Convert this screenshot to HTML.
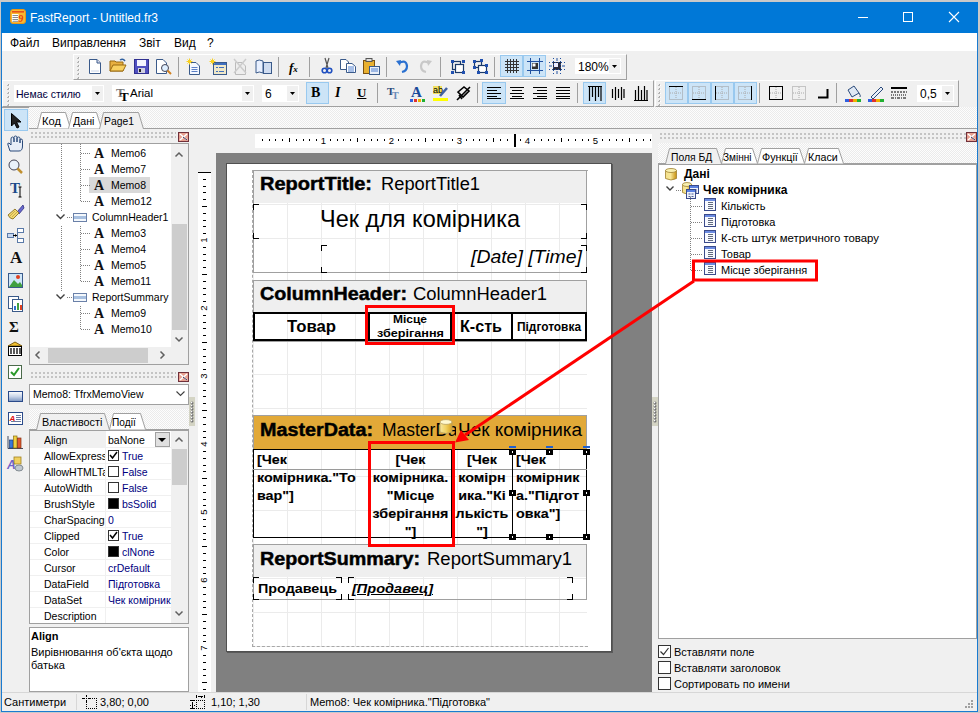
<!DOCTYPE html>
<html><head><meta charset="utf-8">
<style>
*{margin:0;padding:0;box-sizing:border-box}
html,body{width:980px;height:713px;overflow:hidden;background:#c9c9c9;font-family:"Liberation Sans",sans-serif}
.a{position:absolute}
.t{position:absolute;white-space:nowrap;line-height:1}
svg{overflow:visible}
</style></head><body>
<div class="a" style="left:0px;top:0px;width:980px;height:713px;background:#c9c9c9"></div>
<div class="a" style="left:1px;top:2px;width:977px;height:710px;background:#f0f0f0;border-left:1px solid #1a7bd0;border-right:1px solid #1a7bd0;border-bottom:1px solid #1a7bd0"></div>
<div class="a" style="left:1px;top:2px;width:977px;height:31px;background:#0078d7"></div>
<svg class="a" style="left:10px;top:9px;" width="16" height="15" viewBox="0 0 16 15"><rect x="0.5" y="0.5" width="15" height="14" rx="2.5" fill="#f8b830" stroke="#e89818"/><rect x="2" y="2" width="12" height="1.6" fill="#e8501a"/><rect x="2" y="5" width="6.5" height="8" fill="#fff"/><path d="M2.5 6.5H8M2.5 8.5H8M2.5 10.5H8M2.5 12.3H8" stroke="#8a8a8a" stroke-width="1"/><text x="8.3" y="13" font-size="10" font-style="italic" font-weight="bold" fill="#e83a10" font-family="Liberation Serif">9</text></svg>
<div class="t" style="left:30px;top:12px;font-size:12px;color:#fff;">FastReport - Untitled.fr3</div>
<div class="a" style="left:858px;top:17px;width:10px;height:1px;background:#fff"></div>
<div class="a" style="left:903px;top:12px;width:10px;height:10px;border:1px solid #fff"></div>
<svg class="a" style="left:949px;top:12px;" width="10" height="10" viewBox="0 0 10 10"><path d="M0 0L10 10M10 0L0 10" stroke="#fff" stroke-width="1.1"/></svg>
<div class="a" style="left:2px;top:33px;width:975px;height:18px;background:#fff"></div>
<div class="t" style="left:10px;top:37px;font-size:12px;color:#000;">Файл</div>
<div class="t" style="left:52px;top:37px;font-size:12px;color:#000;">Виправлення</div>
<div class="t" style="left:139px;top:37px;font-size:12px;color:#000;">Звіт</div>
<div class="t" style="left:174px;top:37px;font-size:12px;color:#000;">Вид</div>
<div class="t" style="left:207px;top:37px;font-size:12px;color:#000;">?</div>
<div class="a" style="left:73px;top:54px;width:554px;height:26px;border-top:1px solid #fff;border-left:1px solid #fff;border-bottom:1px solid #a0a0a0;border-right:1px solid #a0a0a0;background:#f0f0f0"></div>
<div class="a" style="left:78px;top:57px;width:1px;height:1px;background:#a8a8a8"></div>
<div class="a" style="left:77px;top:58px;width:2px;height:1px;background:#b8b8b8"></div>
<div class="a" style="left:79px;top:58px;width:1px;height:1px;background:#fff"></div>
<div class="a" style="left:78px;top:61px;width:1px;height:1px;background:#a8a8a8"></div>
<div class="a" style="left:77px;top:62px;width:2px;height:1px;background:#b8b8b8"></div>
<div class="a" style="left:79px;top:62px;width:1px;height:1px;background:#fff"></div>
<div class="a" style="left:78px;top:65px;width:1px;height:1px;background:#a8a8a8"></div>
<div class="a" style="left:77px;top:66px;width:2px;height:1px;background:#b8b8b8"></div>
<div class="a" style="left:79px;top:66px;width:1px;height:1px;background:#fff"></div>
<div class="a" style="left:78px;top:69px;width:1px;height:1px;background:#a8a8a8"></div>
<div class="a" style="left:77px;top:70px;width:2px;height:1px;background:#b8b8b8"></div>
<div class="a" style="left:79px;top:70px;width:1px;height:1px;background:#fff"></div>
<div class="a" style="left:78px;top:73px;width:1px;height:1px;background:#a8a8a8"></div>
<div class="a" style="left:77px;top:74px;width:2px;height:1px;background:#b8b8b8"></div>
<div class="a" style="left:79px;top:74px;width:1px;height:1px;background:#fff"></div>
<div class="a" style="left:78px;top:77px;width:1px;height:1px;background:#a8a8a8"></div>
<div class="a" style="left:77px;top:78px;width:2px;height:1px;background:#b8b8b8"></div>
<div class="a" style="left:79px;top:78px;width:1px;height:1px;background:#fff"></div>
<svg class="a" style="left:89px;top:59px;" width="12" height="15" viewBox="0 0 12 15"><path d="M0.5 0.5H8L11.5 4V14.5H0.5Z" fill="#fff" stroke="#3a5a8a"/><path d="M8 0.5V4H11.5" fill="#dde" stroke="#3a5a8a"/><path d="M2 12H10" stroke="#c8d4e8"/></svg>
<svg class="a" style="left:109px;top:58px;" width="18" height="15" viewBox="0 0 18 15"><path d="M1 3H6L7 4H14V13H1Z" fill="#e8b040" stroke="#9a6a10"/><path d="M1 13L4 7H17L14 13Z" fill="#f8d060" stroke="#9a6a10"/><path d="M11 2Q14 0 16 3" stroke="#3060a0" fill="none" stroke-width="1.5"/></svg>
<svg class="a" style="left:134px;top:59px;" width="15" height="15" viewBox="0 0 15 15"><rect x="0.5" y="0.5" width="14" height="14" fill="#5050c0" stroke="#303090"/><rect x="3" y="1" width="9" height="6" fill="#f4f4ff"/><rect x="4" y="9" width="7" height="5" fill="#d0d0e0"/><rect x="5" y="10" width="2" height="3" fill="#222"/></svg>
<svg class="a" style="left:156px;top:59px;" width="16" height="16" viewBox="0 0 16 16"><path d="M0.5 0.5H7L10.5 4V14.5H0.5Z" fill="#fff" stroke="#3a5a8a"/><circle cx="9" cy="9" r="3.5" fill="#dfefff" stroke="#445"/><path d="M11.5 11.5L15 15" stroke="#d08020" stroke-width="2"/></svg>
<div class="a" style="left:178px;top:57px;width:1px;height:20px;background:#a0a0a0"></div>
<svg class="a" style="left:186px;top:58px;" width="15" height="17" viewBox="0 0 15 17"><path d="M3.5 4.5H10L13.5 8V16.5H3.5Z" fill="#f4f8ff" stroke="#3a5a8a"/><path d="M5.5 9.5H11.5M5.5 11.5H11.5M5.5 13.5H11.5" stroke="#4a70c0" stroke-width="0.9"/><path d="M3.5 0.5V6.5M0.5 3.5H6.5M1.5 1.5L5.5 5.5M5.5 1.5L1.5 5.5" stroke="#f8d020" stroke-width="1"/></svg>
<svg class="a" style="left:209px;top:58px;" width="18" height="17" viewBox="0 0 18 17"><rect x="4.5" y="4.5" width="13" height="12" fill="#f0e8c8" stroke="#3a5a8a"/><rect x="5" y="5" width="12" height="2" fill="#4070c0"/><path d="M7 9.5H9M10 9.5H15M7 13.5H9M10 13.5H15" stroke="#4070c0" stroke-width="1.2"/><path d="M3.5 0.5V6.5M0.5 3.5H6.5M1.5 1.5L5.5 5.5M5.5 1.5L1.5 5.5" stroke="#f8d020" stroke-width="1"/></svg>
<svg class="a" style="left:233px;top:58px;" width="15" height="17" viewBox="0 0 15 17"><path d="M2.5 4.5H9L12.5 8V16.5H2.5Z" fill="#eee" stroke="#bbb"/><path d="M1 1L13 15M13 1L1 15" stroke="#ccc" stroke-width="1.5"/></svg>
<svg class="a" style="left:255px;top:59px;" width="17" height="15" viewBox="0 0 17 15"><path d="M1 2Q4 0 8 2V14Q4 12 1 14Z" fill="#e8f0ff" stroke="#3a5a8a"/><rect x="8.5" y="3.5" width="8" height="11" fill="#cfdcf0" stroke="#3a5a8a"/></svg>
<div class="a" style="left:278px;top:57px;width:1px;height:20px;background:#a0a0a0"></div>
<div class="t" style="left:289px;top:61px;font-size:13px;color:#000;font-family:'Liberation Serif',serif"><i><b>f</b></i><i style='font-size:9px'><b>x</b></i></div>
<div class="a" style="left:309px;top:57px;width:1px;height:20px;background:#a0a0a0"></div>
<svg class="a" style="left:322px;top:58px;" width="10" height="16" viewBox="0 0 10 16"><path d="M3 0L6 10M7 0L4 10" stroke="#555" stroke-width="1.2"/><circle cx="2.5" cy="12.5" r="2.3" fill="none" stroke="#2050c0" stroke-width="1.6"/><circle cx="7.5" cy="12.5" r="2.3" fill="none" stroke="#2050c0" stroke-width="1.6"/></svg>
<svg class="a" style="left:340px;top:59px;" width="17" height="14" viewBox="0 0 17 14"><path d="M0.5 0.5H6L8.5 3V10.5H0.5Z" fill="#fff" stroke="#3a5a8a"/><path d="M6.5 4.5H12L15.5 7.5V13.5H6.5Z" fill="#fff" stroke="#3a5a8a"/><path d="M8 8H14M8 10H14M8 12H14" stroke="#5080d0"/></svg>
<svg class="a" style="left:363px;top:58px;" width="18" height="17" viewBox="0 0 18 17"><rect x="0.5" y="2.5" width="11" height="13" fill="#e8b030" stroke="#7a5010"/><rect x="3" y="0.5" width="6" height="3" fill="#ddd" stroke="#555"/><rect x="6.5" y="8.5" width="10" height="8" fill="#e8eef8" stroke="#3a5a8a"/><path d="M8 11H15M8 13H15" stroke="#5080d0"/></svg>
<div class="a" style="left:386px;top:57px;width:1px;height:20px;background:#a0a0a0"></div>
<svg class="a" style="left:396px;top:59px;" width="13" height="14" viewBox="0 0 13 14"><path d="M3 4Q10 0 11 7Q11 12 6 13" fill="none" stroke="#2a70d0" stroke-width="2.2"/><path d="M0 2L5 1L4 7Z" fill="#2a70d0"/></svg>
<svg class="a" style="left:419px;top:59px;" width="13" height="14" viewBox="0 0 13 14"><path d="M10 4Q3 0 2 7Q2 12 7 13" fill="none" stroke="#c8c8c8" stroke-width="2.2"/><path d="M13 2L8 1L9 7Z" fill="#c8c8c8"/></svg>
<div class="a" style="left:440px;top:57px;width:1px;height:20px;background:#a0a0a0"></div>
<svg class="a" style="left:450px;top:59px;" width="16" height="15" viewBox="0 0 16 15"><rect x="2.5" y="2.5" width="8" height="8" fill="none" stroke="#1a3a6a" stroke-width="1.2"/><rect x="5.5" y="5.5" width="8" height="8" fill="#fff" stroke="#1a3a6a" stroke-width="1.2"/><rect x="1" y="1" width="3" height="3" fill="#2050b0"/><rect x="12" y="1" width="3" height="3" fill="#2050b0"/><rect x="1" y="12" width="3" height="3" fill="#2050b0"/><rect x="12" y="12" width="3" height="3" fill="#2050b0"/></svg>
<svg class="a" style="left:472px;top:59px;" width="17" height="15" viewBox="0 0 17 15"><rect x="2.5" y="2.5" width="7" height="6" fill="none" stroke="#1a3a6a" stroke-width="1.2"/><rect x="6.5" y="6.5" width="8" height="7" fill="#fff" stroke="#1a3a6a" stroke-width="1.2"/><rect x="1" y="1" width="3" height="3" fill="#2050b0"/><rect x="8" y="0" width="3" height="3" fill="#2050b0"/><rect x="13" y="5" width="3" height="3" fill="#2050b0"/><rect x="1" y="7" width="3" height="3" fill="#2050b0"/><rect x="5" y="12" width="3" height="3" fill="#2050b0"/><rect x="13" y="12" width="3" height="3" fill="#2050b0"/></svg>
<div class="a" style="left:494px;top:57px;width:1px;height:20px;background:#a0a0a0"></div>
<div class="a" style="left:500px;top:55px;width:23px;height:22px;background:#cce4f7;border:1px solid #99c9ef"></div>
<svg class="a" style="left:505px;top:59px;" width="14" height="14" viewBox="0 0 14 14"><path d="M0 2.5H14M0 5.5H14M0 8.5H14M0 11.5H14M2.5 0V14M5.5 0V14M8.5 0V14M11.5 0V14" stroke="#333" stroke-width="1"/></svg>
<div class="a" style="left:523px;top:55px;width:23px;height:22px;background:#cce4f7;border:1px solid #99c9ef"></div>
<svg class="a" style="left:527px;top:58px;" width="16" height="16" viewBox="0 0 16 16"><path d="M0 3.5H16M0 12.5H16M3.5 0V16M12.5 0V16" stroke="#2050a0"/><rect x="5" y="5" width="6" height="6" fill="#333"/><rect x="5.5" y="5.5" width="3" height="3" fill="#fff"/></svg>
<svg class="a" style="left:549px;top:58px;" width="16" height="16" viewBox="0 0 16 16"><rect x="4" y="4" width="8" height="8" fill="#2a2a3a"/><rect x="5" y="5" width="4" height="4" fill="#eef"/><path d="M8 0V3M8 13V16M0 8H3M13 8H16" stroke="#2050a0" stroke-width="1"/><path d="M0 4.5H16M0 11.5H16M4.5 0V16M11.5 0V16" stroke="#2050a0" stroke-dasharray="1 2"/></svg>
<div class="a" style="left:575px;top:58px;width:46px;height:16px;background:#fff"></div>
<div class="a" style="left:609px;top:59px;width:11px;height:14px;background:#f0f0f0"></div>
<svg class="a" style="left:612px;top:65px;" width="5" height="3" viewBox="0 0 5 3"><path d="M0 0H5L2.5 3Z" fill="#000"/></svg>
<div class="t" style="left:578px;top:61px;font-size:12px;color:#000;">180%</div>
<div class="a" style="left:2px;top:80px;width:652px;height:27px;border-top:1px solid #fff;border-left:1px solid #fff;border-bottom:1px solid #a0a0a0;border-right:1px solid #a0a0a0;background:#f0f0f0"></div>
<div class="a" style="left:8px;top:84px;width:1px;height:1px;background:#a8a8a8"></div>
<div class="a" style="left:7px;top:85px;width:2px;height:1px;background:#b8b8b8"></div>
<div class="a" style="left:9px;top:85px;width:1px;height:1px;background:#fff"></div>
<div class="a" style="left:8px;top:88px;width:1px;height:1px;background:#a8a8a8"></div>
<div class="a" style="left:7px;top:89px;width:2px;height:1px;background:#b8b8b8"></div>
<div class="a" style="left:9px;top:89px;width:1px;height:1px;background:#fff"></div>
<div class="a" style="left:8px;top:92px;width:1px;height:1px;background:#a8a8a8"></div>
<div class="a" style="left:7px;top:93px;width:2px;height:1px;background:#b8b8b8"></div>
<div class="a" style="left:9px;top:93px;width:1px;height:1px;background:#fff"></div>
<div class="a" style="left:8px;top:96px;width:1px;height:1px;background:#a8a8a8"></div>
<div class="a" style="left:7px;top:97px;width:2px;height:1px;background:#b8b8b8"></div>
<div class="a" style="left:9px;top:97px;width:1px;height:1px;background:#fff"></div>
<div class="a" style="left:8px;top:100px;width:1px;height:1px;background:#a8a8a8"></div>
<div class="a" style="left:7px;top:101px;width:2px;height:1px;background:#b8b8b8"></div>
<div class="a" style="left:9px;top:101px;width:1px;height:1px;background:#fff"></div>
<div class="a" style="left:8px;top:104px;width:1px;height:1px;background:#a8a8a8"></div>
<div class="a" style="left:7px;top:105px;width:2px;height:1px;background:#b8b8b8"></div>
<div class="a" style="left:9px;top:105px;width:1px;height:1px;background:#fff"></div>
<div class="a" style="left:14px;top:85px;width:90px;height:17px;background:#fff"></div>
<div class="a" style="left:92px;top:86px;width:11px;height:15px;background:#f0f0f0"></div>
<svg class="a" style="left:95px;top:92px;" width="5" height="3" viewBox="0 0 5 3"><path d="M0 0H5L2.5 3Z" fill="#000"/></svg>
<div class="t" style="left:16px;top:89.0px;font-size:10.5px;color:#000040;">Немає стилю</div>
<div class="a" style="left:112px;top:85px;width:142px;height:17px;background:#fff"></div>
<div class="a" style="left:242px;top:86px;width:11px;height:15px;background:#f0f0f0"></div>
<svg class="a" style="left:245px;top:92px;" width="5" height="3" viewBox="0 0 5 3"><path d="M0 0H5L2.5 3Z" fill="#000"/></svg>
<div class="t" style="left:115px;top:88px;font-size:12px;color:#000;"></div>
<svg class="a" style="left:116px;top:87px;" width="15" height="15" viewBox="0 0 15 15"><text x="0" y="10" font-family="Liberation Serif" font-weight="bold" font-size="13" fill="#777">T</text><text x="4" y="14" font-family="Liberation Serif" font-weight="bold" font-size="13" fill="#000">T</text></svg>
<div class="t" style="left:130px;top:88px;font-size:11.5px;color:#000;">Arial</div>
<div class="a" style="left:262px;top:85px;width:37px;height:17px;background:#fff"></div>
<div class="a" style="left:287px;top:86px;width:11px;height:15px;background:#f0f0f0"></div>
<svg class="a" style="left:290px;top:92px;" width="5" height="3" viewBox="0 0 5 3"><path d="M0 0H5L2.5 3Z" fill="#000"/></svg>
<div class="t" style="left:265px;top:88px;font-size:12px;color:#000;">6</div>
<div class="a" style="left:306px;top:82px;width:23px;height:22px;background:#cce4f7;border:1px solid #99c9ef"></div>
<div class="t" style="left:311px;top:86px;font-size:14px;color:#000;font-family:'Liberation Serif',serif"><b>B</b></div>
<div class="t" style="left:335px;top:86px;font-size:14px;color:#000;font-family:'Liberation Serif',serif"><i><b>I</b></i></div>
<div class="t" style="left:357px;top:86px;font-size:13px;color:#000;font-family:'Liberation Serif',serif"><b><u>U</u></b></div>
<div class="a" style="left:377px;top:83px;width:1px;height:20px;background:#a0a0a0"></div>
<svg class="a" style="left:387px;top:86px;" width="14" height="14" viewBox="0 0 14 14"><text x="0" y="9" font-family="Liberation Serif" font-weight="bold" font-size="11" fill="#2a4a7a">T</text><text x="5" y="13" font-family="Liberation Serif" font-weight="bold" font-size="10" fill="#6a8ab8">T</text></svg>
<svg class="a" style="left:410px;top:85px;" width="16" height="17" viewBox="0 0 16 17"><text x="1" y="12" font-family="Liberation Serif" font-weight="bold" font-size="15" fill="#1a4a9a">A</text><rect x="0" y="14" width="3" height="3" fill="#3060e0"/><rect x="4" y="14" width="3" height="3" fill="#e03030"/><rect x="8" y="14" width="3" height="3" fill="#f0b000"/><rect x="12" y="14" width="3" height="3" fill="#20b030"/></svg>
<svg class="a" style="left:432px;top:85px;" width="17" height="17" viewBox="0 0 17 17"><rect x="1" y="1" width="9" height="8" fill="#f0e060"/><text x="1" y="8" font-family="Liberation Sans" font-size="9" fill="#000">ab</text><path d="M8 11L15 3" stroke="#4060a0" stroke-width="2.5"/><rect x="1" y="13" width="15" height="3" fill="#ffff00"/></svg>
<svg class="a" style="left:456px;top:86px;" width="15" height="15" viewBox="0 0 15 15"><path d="M2 6L8 1L13 5L7 11Z" fill="none" stroke="#000" stroke-width="1.6"/><path d="M1 14L14 1" stroke="#000" stroke-width="1.6"/><path d="M3 9L6 13" stroke="#000" stroke-width="1.6"/></svg>
<div class="a" style="left:477px;top:83px;width:1px;height:20px;background:#a0a0a0"></div>
<div class="a" style="left:482px;top:82px;width:24px;height:22px;background:#cce4f7;border:1px solid #99c9ef"></div>
<svg class="a" style="left:487px;top:87px;" width="14" height="12" viewBox="0 0 14 12"><path d="M0 0.5H14M0 3.5H10M0 6.5H14M0 9.5H10M0 11.5H14" stroke="#000"/></svg>
<svg class="a" style="left:510px;top:87px;" width="14" height="12" viewBox="0 0 14 12"><path d="M0 0.5H14M2 3.5H12M0 6.5H14M2 9.5H12M0 11.5H14" stroke="#000"/></svg>
<svg class="a" style="left:533px;top:87px;" width="14" height="12" viewBox="0 0 14 12"><path d="M0 0.5H14M4 3.5H14M0 6.5H14M4 9.5H14M0 11.5H14" stroke="#000"/></svg>
<svg class="a" style="left:556px;top:87px;" width="14" height="12" viewBox="0 0 14 12"><path d="M0 0.5H14M0 3.5H14M0 6.5H14M0 9.5H14M0 11.5H14" stroke="#000"/></svg>
<div class="a" style="left:577px;top:83px;width:1px;height:20px;background:#a0a0a0"></div>
<div class="a" style="left:583px;top:82px;width:23px;height:22px;background:#cce4f7;border:1px solid #99c9ef"></div>
<svg class="a" style="left:588px;top:86px;" width="14" height="15" viewBox="0 0 14 15"><path d="M0 0.5H14" stroke="#000"/><path d="M1.5 0V15M4.5 0V11M7.5 0V15M10.5 0V11M13 0V15" stroke="#000" stroke-width="1.2"/></svg>
<svg class="a" style="left:611px;top:86px;" width="14" height="15" viewBox="0 0 14 15"><path d="M1.5 3V12M4.5 1V14M7.5 3V12M10.5 1V14M13 3V12" stroke="#000" stroke-width="1.2"/></svg>
<svg class="a" style="left:634px;top:86px;" width="14" height="15" viewBox="0 0 14 15"><path d="M0 14.5H14" stroke="#000"/><path d="M1.5 4V15M4.5 0V15M7.5 4V15M10.5 0V15M13 4V15" stroke="#000" stroke-width="1.2"/></svg>
<div class="a" style="left:655px;top:80px;width:304px;height:27px;border-top:1px solid #fff;border-left:1px solid #fff;border-bottom:1px solid #a0a0a0;border-right:1px solid #a0a0a0;background:#f0f0f0"></div>
<div class="a" style="left:659px;top:84px;width:1px;height:1px;background:#a8a8a8"></div>
<div class="a" style="left:658px;top:85px;width:2px;height:1px;background:#b8b8b8"></div>
<div class="a" style="left:660px;top:85px;width:1px;height:1px;background:#fff"></div>
<div class="a" style="left:659px;top:88px;width:1px;height:1px;background:#a8a8a8"></div>
<div class="a" style="left:658px;top:89px;width:2px;height:1px;background:#b8b8b8"></div>
<div class="a" style="left:660px;top:89px;width:1px;height:1px;background:#fff"></div>
<div class="a" style="left:659px;top:92px;width:1px;height:1px;background:#a8a8a8"></div>
<div class="a" style="left:658px;top:93px;width:2px;height:1px;background:#b8b8b8"></div>
<div class="a" style="left:660px;top:93px;width:1px;height:1px;background:#fff"></div>
<div class="a" style="left:659px;top:96px;width:1px;height:1px;background:#a8a8a8"></div>
<div class="a" style="left:658px;top:97px;width:2px;height:1px;background:#b8b8b8"></div>
<div class="a" style="left:660px;top:97px;width:1px;height:1px;background:#fff"></div>
<div class="a" style="left:659px;top:100px;width:1px;height:1px;background:#a8a8a8"></div>
<div class="a" style="left:658px;top:101px;width:2px;height:1px;background:#b8b8b8"></div>
<div class="a" style="left:660px;top:101px;width:1px;height:1px;background:#fff"></div>
<div class="a" style="left:659px;top:104px;width:1px;height:1px;background:#a8a8a8"></div>
<div class="a" style="left:658px;top:105px;width:2px;height:1px;background:#b8b8b8"></div>
<div class="a" style="left:660px;top:105px;width:1px;height:1px;background:#fff"></div>
<div class="a" style="left:665px;top:82px;width:23px;height:22px;background:#cce4f7;border:1px solid #99c9ef"></div>
<div class="a" style="left:688px;top:82px;width:23px;height:22px;background:#cce4f7;border:1px solid #99c9ef"></div>
<div class="a" style="left:711px;top:82px;width:23px;height:22px;background:#cce4f7;border:1px solid #99c9ef"></div>
<div class="a" style="left:734px;top:82px;width:23px;height:22px;background:#cce4f7;border:1px solid #99c9ef"></div>
<svg class="a" style="left:669px;top:86px;" width="14" height="14" viewBox="0 0 14 14"><path d="M0.5 0.5H13.5V13.5H0.5Z" fill="none" stroke="#999" stroke-dasharray="1 1"/><path d="M7 1V13M1 7H13" stroke="#aaa" stroke-dasharray="1 1"/><path d="M0 0.5H14" stroke="#000"/></svg>
<svg class="a" style="left:692px;top:86px;" width="14" height="14" viewBox="0 0 14 14"><path d="M0.5 0.5H13.5V13.5H0.5Z" fill="none" stroke="#999" stroke-dasharray="1 1"/><path d="M7 1V13M1 7H13" stroke="#aaa" stroke-dasharray="1 1"/><path d="M0 13.5H14" stroke="#000"/></svg>
<svg class="a" style="left:715px;top:86px;" width="14" height="14" viewBox="0 0 14 14"><path d="M0.5 0.5H13.5V13.5H0.5Z" fill="none" stroke="#999" stroke-dasharray="1 1"/><path d="M7 1V13M1 7H13" stroke="#aaa" stroke-dasharray="1 1"/><path d="M0.5 0V14" stroke="#000"/></svg>
<svg class="a" style="left:738px;top:86px;" width="14" height="14" viewBox="0 0 14 14"><path d="M0.5 0.5H13.5V13.5H0.5Z" fill="none" stroke="#999" stroke-dasharray="1 1"/><path d="M7 1V13M1 7H13" stroke="#aaa" stroke-dasharray="1 1"/><path d="M13.5 0V14" stroke="#000"/></svg>
<div class="a" style="left:759px;top:83px;width:1px;height:20px;background:#a0a0a0"></div>
<svg class="a" style="left:769px;top:86px;" width="14" height="14" viewBox="0 0 14 14"><path d="M0.5 0.5H13.5V13.5H0.5Z" fill="none" stroke="#999" stroke-dasharray="1 1"/><path d="M7 1V13M1 7H13" stroke="#aaa" stroke-dasharray="1 1"/><path d="M0 0.5H14" stroke="#000"/><path d="M0 13.5H14" stroke="#000"/><path d="M0.5 0V14" stroke="#000"/><path d="M13.5 0V14" stroke="#000"/></svg>
<svg class="a" style="left:792px;top:86px;" width="14" height="14" viewBox="0 0 14 14"><path d="M0.5 0.5H13.5V13.5H0.5Z" fill="none" stroke="#999" stroke-dasharray="1 1"/><path d="M7 1V13M1 7H13" stroke="#aaa" stroke-dasharray="1 1"/></svg>
<svg class="a" style="left:815px;top:86px;" width="14" height="14" viewBox="0 0 14 14"><path d="M3 11.5H12.5V3" fill="none" stroke="#000" stroke-width="2"/></svg>
<div class="a" style="left:836px;top:83px;width:1px;height:20px;background:#a0a0a0"></div>
<svg class="a" style="left:845px;top:85px;" width="17" height="17" viewBox="0 0 17 17"><path d="M3 5L9 1L14 8L7 12Z" fill="#dfe8f4" stroke="#2a4a7a"/><path d="M14 8Q16 11 15 12" stroke="#2a4a7a" fill="none"/><rect x="0" y="14" width="4" height="3" fill="#3060e0"/><rect x="4" y="14" width="4" height="3" fill="#e03030"/><rect x="8" y="14" width="4" height="3" fill="#f0b000"/><rect x="12" y="14" width="4" height="3" fill="#20b030"/></svg>
<svg class="a" style="left:868px;top:85px;" width="17" height="17" viewBox="0 0 17 17"><path d="M3 12L13 2L15 4L5 14Z" fill="#e8eef8" stroke="#2a4a7a"/><rect x="0" y="14" width="4" height="3" fill="#3060e0"/><rect x="4" y="14" width="4" height="3" fill="#e03030"/><rect x="8" y="14" width="4" height="3" fill="#f0b000"/><rect x="12" y="14" width="4" height="3" fill="#20b030"/></svg>
<svg class="a" style="left:891px;top:87px;" width="16" height="12" viewBox="0 0 16 12"><path d="M0 1H16" stroke="#000" stroke-width="2"/><path d="M0 5H16" stroke="#000" stroke-dasharray="2 1"/><path d="M0 8H16" stroke="#000" stroke-dasharray="1 1"/><path d="M0 11H16" stroke="#000" stroke-dasharray="3 1 1 1"/></svg>
<div class="a" style="left:917px;top:85px;width:37px;height:17px;background:#fff"></div>
<div class="a" style="left:942px;top:86px;width:11px;height:15px;background:#f0f0f0"></div>
<svg class="a" style="left:945px;top:92px;" width="5" height="3" viewBox="0 0 5 3"><path d="M0 0H5L2.5 3Z" fill="#000"/></svg>
<div class="t" style="left:920px;top:88px;font-size:12px;color:#000;">0,5</div>
<div class="a" style="left:2px;top:107px;width:975px;height:1px;background:#a0a0a0"></div>
<div class="a" style="left:4px;top:109px;width:24px;height:22px;background:#cce4f7;border:1px solid #99c9ef"></div>
<svg class="a" style="left:11px;top:113px;" width="11" height="16" viewBox="0 0 11 16"><path d="M0.5 0.5V13L3.5 10L6 15L8 14L5.5 9H10Z" fill="#222" stroke="#000"/></svg>
<svg class="a" style="left:7px;top:136px;" width="16" height="16" viewBox="0 0 16 16"><path d="M3 15L1 9Q0 7 2 7L4 9V3Q4 1 5.5 1Q7 1 7 3V6V1.5Q7 0 8.5 0Q10 0 10 1.5V6V2Q10 1 11.5 1Q13 1 13 2.5V7V4Q13 3 14 3Q15.5 3 15.5 4.5V10Q15.5 15 12 15Z" fill="#e8eef8" stroke="#2a4a7a"/></svg>
<svg class="a" style="left:8px;top:159px;" width="15" height="15" viewBox="0 0 15 15"><circle cx="6" cy="6" r="5" fill="#eaf2fb" stroke="#445"/><path d="M9.5 9.5L14 14" stroke="#c09030" stroke-width="2.5"/></svg>
<svg class="a" style="left:10px;top:181px;" width="13" height="17" viewBox="0 0 13 17"><text x="0" y="12" font-family="Liberation Serif" font-weight="bold" font-size="15" fill="#1a4a8a">T</text><path d="M10 6V16M8.5 6H11.5M8.5 16H11.5" stroke="#000"/></svg>
<svg class="a" style="left:7px;top:204px;" width="17" height="16" viewBox="0 0 17 16"><path d="M16 1L10 8L12 10L17 4Z" fill="#6a6ad0" stroke="#303080" stroke-width="0.8"/><path d="M1 11L8 5L12 9L6 15Q3 15 1 11Z" fill="#f0d870" stroke="#8a7020" stroke-width="0.9"/><path d="M3 12L8 7M5 13L10 8" stroke="#c0a040" stroke-width="0.8"/></svg>
<svg class="a" style="left:7px;top:228px;" width="17" height="15" viewBox="0 0 17 15"><rect x="0.5" y="5.5" width="6" height="4" fill="#c8d8f0" stroke="#5a7aa8"/><path d="M6 7.5H10" stroke="#000"/><path d="M8 6L10 7.5L8 9Z" fill="#000"/><path d="M10.5 2.5V12.5" stroke="#5a7aa8"/><rect x="10.5" y="0.5" width="6" height="4" fill="#fff" stroke="#5a7aa8"/><rect x="10.5" y="10.5" width="6" height="4" fill="#fff" stroke="#5a7aa8"/></svg>
<svg class="a" style="left:10px;top:250px;" width="14" height="15" viewBox="0 0 14 15"><text x="0" y="13" font-family="Liberation Serif" font-weight="bold" font-size="17" fill="#111">A</text></svg>
<svg class="a" style="left:8px;top:273px;" width="15" height="15" viewBox="0 0 15 15"><rect x="0.5" y="0.5" width="14" height="14" fill="#cfe6f8" stroke="#3a5a8a"/><path d="M1 14L6 7L10 11L12 9L14 12V14Z" fill="#40a040"/><circle cx="10" cy="4" r="2" fill="#e04020"/></svg>
<svg class="a" style="left:8px;top:296px;" width="15" height="16" viewBox="0 0 15 16"><rect x="0.5" y="0.5" width="10" height="12" fill="#fff" stroke="#3a5a8a"/><rect x="4.5" y="3.5" width="10" height="12" fill="#fff" stroke="#3a5a8a"/><rect x="6" y="10" width="2" height="4" fill="#3070d0"/><rect x="9" y="7" width="2" height="7" fill="#40a040"/><rect x="12" y="9" width="2" height="5" fill="#e04020"/></svg>
<svg class="a" style="left:9px;top:319px;" width="13" height="15" viewBox="0 0 13 15"><text x="0" y="13" font-family="Liberation Serif" font-weight="bold" font-size="15" fill="#111">Σ</text></svg>
<svg class="a" style="left:7px;top:341px;" width="16" height="15" viewBox="0 0 16 15"><path d="M1 5L8 1L15 5Z" fill="#f0c030" stroke="#806010"/><rect x="1.5" y="5.5" width="13" height="9" fill="#fff" stroke="#000"/><path d="M4 7V13M7 7V13M10 7V13M13 7V13" stroke="#000" stroke-width="1.3"/></svg>
<svg class="a" style="left:8px;top:365px;" width="14" height="14" viewBox="0 0 14 14"><rect x="0.5" y="0.5" width="13" height="13" fill="#fff" stroke="#4a6a4a"/><path d="M3 7L6 10L11 3" fill="none" stroke="#2a9a2a" stroke-width="2"/></svg>
<svg class="a" style="left:8px;top:391px;" width="15" height="11" viewBox="0 0 15 11"><defs><linearGradient id="bg1" x1="0" y1="0" x2="0" y2="1"><stop offset="0" stop-color="#ffffff"/><stop offset="0.5" stop-color="#c8d4e8"/><stop offset="1" stop-color="#7a94c0"/></linearGradient></defs><rect x="0.5" y="0.5" width="14" height="10" fill="url(#bg1)" stroke="#2a4a8a"/></svg>
<svg class="a" style="left:8px;top:412px;" width="15" height="13" viewBox="0 0 15 13"><rect x="0.5" y="0.5" width="14" height="12" fill="#fff" stroke="#2a4a8a"/><path d="M8 3.5H13M8 5.5H13M8 7.5H13M3 9.5H13" stroke="#6a7aa0"/><text x="1.5" y="8.5" font-size="8" font-weight="bold" font-style="italic" fill="#e01010" font-family="Liberation Sans">A</text></svg>
<svg class="a" style="left:7px;top:434px;" width="17" height="16" viewBox="0 0 17 16"><path d="M1 2V14.5H16" fill="none" stroke="#404a60"/><rect x="2.5" y="6" width="3.5" height="8" fill="#3a78d8" stroke="#20407a" stroke-width="0.7"/><rect x="6.5" y="2" width="3.5" height="12" fill="#f0d040" stroke="#8a7010" stroke-width="0.7"/><rect x="10.5" y="4" width="3.5" height="10" fill="#e05a30" stroke="#803010" stroke-width="0.7"/></svg>
<svg class="a" style="left:7px;top:456px;" width="17" height="16" viewBox="0 0 17 16"><rect x="7" y="1" width="7" height="7" fill="#f0d060" stroke="#a08020" stroke-width="0.8"/><text x="0" y="13" font-size="12" font-weight="bold" font-style="italic" fill="#7060c8" font-family="Liberation Sans">A</text><ellipse cx="12" cy="12" rx="4" ry="3" fill="#c0c8d0" stroke="#707880" stroke-width="0.8"/></svg>
<svg class="a" style="left:29px;top:107px" width="948" height="21"><defs><pattern id="ht29_107" width="2" height="2" patternUnits="userSpaceOnUse"><rect width="2" height="2" fill="#fdfdfd"/><rect x="0" y="0" width="1" height="1" fill="#ebebeb"/><rect x="1" y="1" width="1" height="1" fill="#ebebeb"/></pattern></defs><rect width="948" height="21" fill="url(#ht29_107)"/></svg>
<div class="a" style="left:29px;top:128px;width:948px;height:1px;background:#a0a0a0"></div>
<svg class="a" style="left:37px;top:112px;" width="34" height="17" viewBox="0 0 34 17"><path d="M0.5 16.5L4.5 0.5H28.5L33.5 16.5" fill="#fff" stroke="#a0a0a0"/></svg>
<div class="t" style="left:42px;top:116px;font-size:11px;color:#000;;transform:scaleX(1.0159);transform-origin:0 0;">Код</div>
<svg class="a" style="left:68px;top:112px;" width="34" height="17" viewBox="0 0 34 17"><path d="M0.5 16.5L4.5 0.5H28.5L33.5 16.5" fill="#fff" stroke="#a0a0a0"/></svg>
<div class="t" style="left:73px;top:116px;font-size:11px;color:#000;;transform:scaleX(0.9686);transform-origin:0 0;">Дані</div>
<svg class="a" style="left:99px;top:112px;" width="45" height="17" viewBox="0 0 45 17"><path d="M0.5 17L4.5 0.5H39.5L44.5 17" fill="#f0f0f0" stroke="#a0a0a0"/></svg>
<div class="t" style="left:104px;top:116px;font-size:11px;color:#000;;transform:scaleX(0.9430);transform-origin:0 0;">Page1</div>
<svg class="a" style="left:31px;top:132px" width="145" height="7"><defs><pattern id="gp31132" width="4" height="4" patternUnits="userSpaceOnUse"><rect x="0" y="0" width="2" height="2" fill="#c4c4c4"/></pattern></defs><rect width="145" height="7" fill="url(#gp31132)"/></svg>
<svg class="a" style="left:178px;top:132px;" width="11" height="10" viewBox="0 0 11 10"><rect x="0.5" y="0.5" width="10" height="9" fill="#e8a090" stroke="#70303a"/><path d="M2 2L9 8M9 2L2 8" stroke="#fff" stroke-width="1.5"/><path d="M5 5L9 8" stroke="#30305a" stroke-width="1"/></svg>
<div class="a" style="left:29px;top:143px;width:160px;height:222px;background:#fff;border:1px solid #a0a0a0"></div>
<div class="a" style="left:171px;top:144px;width:17px;height:203px;background:#f0f0f0"></div>
<div class="a" style="left:172px;top:224px;width:15px;height:106px;background:#cdcdcd"></div>
<svg class="a" style="left:175px;top:152px;" width="8" height="5" viewBox="0 0 8 5"><path d="M0.5 4.5L4 1L7.5 4.5" fill="none" stroke="#606060" stroke-width="1.5"/></svg>
<svg class="a" style="left:175px;top:337px;" width="8" height="5" viewBox="0 0 8 5"><path d="M0.5 0.5L4 4L7.5 0.5" fill="none" stroke="#606060" stroke-width="1.5"/></svg>
<div class="a" style="left:30px;top:347px;width:141px;height:17px;background:#f0f0f0"></div>
<div class="a" style="left:48px;top:348px;width:100px;height:15px;background:#cdcdcd"></div>
<svg class="a" style="left:35px;top:351px;" width="5" height="8" viewBox="0 0 5 8"><path d="M4.5 0.5L1 4L4.5 7.5" fill="none" stroke="#606060" stroke-width="1.5"/></svg>
<svg class="a" style="left:160px;top:351px;" width="5" height="8" viewBox="0 0 5 8"><path d="M0.5 0.5L4 4L0.5 7.5" fill="none" stroke="#606060" stroke-width="1.5"/></svg>
<div class="a" style="left:171px;top:347px;width:17px;height:17px;background:#f0f0f0"></div>
<div class="a" style="left:30px;top:144px;width:141px;height:203px;overflow:hidden">
<div class="a" style="left:59px;top:33px;width:61px;height:16px;background:#d9d9d9"></div>
<div class="a" style="left:31px;top:0px;width:1px;height:68px;background:repeating-linear-gradient(#808080 0 1px,transparent 1px 2px)"></div>
<div class="a" style="left:31px;top:82px;width:1px;height:66px;background:repeating-linear-gradient(#808080 0 1px,transparent 1px 2px)"></div>
<div class="a" style="left:50px;top:0px;width:1px;height:58px;background:repeating-linear-gradient(#808080 0 1px,transparent 1px 2px)"></div>
<div class="a" style="left:50px;top:82px;width:1px;height:56px;background:repeating-linear-gradient(#808080 0 1px,transparent 1px 2px)"></div>
<div class="a" style="left:50px;top:162px;width:1px;height:24px;background:repeating-linear-gradient(#808080 0 1px,transparent 1px 2px)"></div>
<div class="a" style="left:51px;top:9px;width:10px;height:1px;background:repeating-linear-gradient(90deg,#808080 0 1px,transparent 1px 2px)"></div>
<svg class="a" style="left:64px;top:3px" width="12" height="12"><text x="0" y="11" font-family="Liberation Serif" font-weight="bold" font-size="14" fill="#111">A</text></svg>
<div class="t" style="left:81px;top:4px;font-size:10.5px;color:#000;">Memo6</div>
<div class="a" style="left:51px;top:25px;width:10px;height:1px;background:repeating-linear-gradient(90deg,#808080 0 1px,transparent 1px 2px)"></div>
<svg class="a" style="left:64px;top:19px" width="12" height="12"><text x="0" y="11" font-family="Liberation Serif" font-weight="bold" font-size="14" fill="#111">A</text></svg>
<div class="t" style="left:81px;top:20px;font-size:10.5px;color:#000;">Memo7</div>
<div class="a" style="left:51px;top:41px;width:10px;height:1px;background:repeating-linear-gradient(90deg,#808080 0 1px,transparent 1px 2px)"></div>
<svg class="a" style="left:64px;top:35px" width="12" height="12"><text x="0" y="11" font-family="Liberation Serif" font-weight="bold" font-size="14" fill="#111">A</text></svg>
<div class="t" style="left:81px;top:36px;font-size:10.5px;color:#000;">Memo8</div>
<div class="a" style="left:51px;top:57px;width:10px;height:1px;background:repeating-linear-gradient(90deg,#808080 0 1px,transparent 1px 2px)"></div>
<svg class="a" style="left:64px;top:51px" width="12" height="12"><text x="0" y="11" font-family="Liberation Serif" font-weight="bold" font-size="14" fill="#111">A</text></svg>
<div class="t" style="left:81px;top:52px;font-size:10.5px;color:#000;">Memo12</div>
<svg class="a" style="left:26px;top:70px" width="9" height="6"><path d="M0.5 0.5L4.5 4.5L8.5 0.5" fill="none" stroke="#404040" stroke-width="1.4"/></svg>
<div class="a" style="left:37px;top:73px;width:6px;height:1px;background:repeating-linear-gradient(90deg,#808080 0 1px,transparent 1px 2px)"></div>
<svg class="a" style="left:43px;top:69px" width="14" height="9"><rect x="0.5" y="0.5" width="13" height="8" fill="#f4f8fc" stroke="#6a80a8"/><rect x="1" y="3" width="12" height="3" fill="#a8c0e0"/></svg>
<div class="t" style="left:62px;top:68px;font-size:10.5px;color:#000;">ColumnHeader1</div>
<div class="a" style="left:51px;top:89px;width:10px;height:1px;background:repeating-linear-gradient(90deg,#808080 0 1px,transparent 1px 2px)"></div>
<svg class="a" style="left:64px;top:83px" width="12" height="12"><text x="0" y="11" font-family="Liberation Serif" font-weight="bold" font-size="14" fill="#111">A</text></svg>
<div class="t" style="left:81px;top:84px;font-size:10.5px;color:#000;">Memo3</div>
<div class="a" style="left:51px;top:105px;width:10px;height:1px;background:repeating-linear-gradient(90deg,#808080 0 1px,transparent 1px 2px)"></div>
<svg class="a" style="left:64px;top:99px" width="12" height="12"><text x="0" y="11" font-family="Liberation Serif" font-weight="bold" font-size="14" fill="#111">A</text></svg>
<div class="t" style="left:81px;top:100px;font-size:10.5px;color:#000;">Memo4</div>
<div class="a" style="left:51px;top:121px;width:10px;height:1px;background:repeating-linear-gradient(90deg,#808080 0 1px,transparent 1px 2px)"></div>
<svg class="a" style="left:64px;top:115px" width="12" height="12"><text x="0" y="11" font-family="Liberation Serif" font-weight="bold" font-size="14" fill="#111">A</text></svg>
<div class="t" style="left:81px;top:116px;font-size:10.5px;color:#000;">Memo5</div>
<div class="a" style="left:51px;top:137px;width:10px;height:1px;background:repeating-linear-gradient(90deg,#808080 0 1px,transparent 1px 2px)"></div>
<svg class="a" style="left:64px;top:131px" width="12" height="12"><text x="0" y="11" font-family="Liberation Serif" font-weight="bold" font-size="14" fill="#111">A</text></svg>
<div class="t" style="left:81px;top:132px;font-size:10.5px;color:#000;">Memo11</div>
<svg class="a" style="left:26px;top:150px" width="9" height="6"><path d="M0.5 0.5L4.5 4.5L8.5 0.5" fill="none" stroke="#404040" stroke-width="1.4"/></svg>
<div class="a" style="left:37px;top:153px;width:6px;height:1px;background:repeating-linear-gradient(90deg,#808080 0 1px,transparent 1px 2px)"></div>
<svg class="a" style="left:43px;top:149px" width="14" height="9"><rect x="0.5" y="0.5" width="13" height="8" fill="#f4f8fc" stroke="#6a80a8"/><rect x="1" y="3" width="12" height="3" fill="#a8c0e0"/></svg>
<div class="t" style="left:62px;top:148px;font-size:10.5px;color:#000;">ReportSummary</div>
<div class="a" style="left:51px;top:169px;width:10px;height:1px;background:repeating-linear-gradient(90deg,#808080 0 1px,transparent 1px 2px)"></div>
<svg class="a" style="left:64px;top:163px" width="12" height="12"><text x="0" y="11" font-family="Liberation Serif" font-weight="bold" font-size="14" fill="#111">A</text></svg>
<div class="t" style="left:81px;top:164px;font-size:10.5px;color:#000;">Memo9</div>
<div class="a" style="left:51px;top:185px;width:10px;height:1px;background:repeating-linear-gradient(90deg,#808080 0 1px,transparent 1px 2px)"></div>
<svg class="a" style="left:64px;top:179px" width="12" height="12"><text x="0" y="11" font-family="Liberation Serif" font-weight="bold" font-size="14" fill="#111">A</text></svg>
<div class="t" style="left:81px;top:180px;font-size:10.5px;color:#000;">Memo10</div>
</div>
<svg class="a" style="left:31px;top:372px" width="145" height="7"><defs><pattern id="gp31372" width="4" height="4" patternUnits="userSpaceOnUse"><rect x="0" y="0" width="2" height="2" fill="#c4c4c4"/></pattern></defs><rect width="145" height="7" fill="url(#gp31372)"/></svg>
<svg class="a" style="left:178px;top:372px;" width="11" height="10" viewBox="0 0 11 10"><rect x="0.5" y="0.5" width="10" height="9" fill="#e8a090" stroke="#70303a"/><path d="M2 2L9 8M9 2L2 8" stroke="#fff" stroke-width="1.5"/><path d="M5 5L9 8" stroke="#30305a" stroke-width="1"/></svg>
<div class="a" style="left:29px;top:384px;width:160px;height:21px;background:#fff;border:1px solid #a0a0a0"></div>
<div class="t" style="left:33px;top:389px;font-size:11px;color:#000;;transform:scaleX(0.9546);transform-origin:0 0;">Memo8: TfrxMemoView</div>
<svg class="a" style="left:176px;top:391px;" width="9" height="5" viewBox="0 0 9 5"><path d="M0.5 0.5L4.5 4.5L8.5 0.5" fill="none" stroke="#404040" stroke-width="1.1"/></svg>
<svg class="a" style="left:29px;top:409px" width="160" height="20"><defs><pattern id="ht29_409" width="2" height="2" patternUnits="userSpaceOnUse"><rect width="2" height="2" fill="#fdfdfd"/><rect x="0" y="0" width="1" height="1" fill="#ebebeb"/><rect x="1" y="1" width="1" height="1" fill="#ebebeb"/></pattern></defs><rect width="160" height="20" fill="url(#ht29_409)"/></svg>
<div class="a" style="left:29px;top:429px;width:160px;height:1px;background:#a0a0a0"></div>
<svg class="a" style="left:109px;top:413px;" width="37" height="17" viewBox="0 0 37 17"><path d="M0.5 16.5L4.5 0.5H31.5L36.5 16.5" fill="#fff" stroke="#a0a0a0"/></svg>
<div class="t" style="left:112px;top:417px;font-size:11px;color:#000;;transform:scaleX(0.9221);transform-origin:0 0;">Події</div>
<svg class="a" style="left:36px;top:413px;" width="74" height="17" viewBox="0 0 74 17"><path d="M0.5 17L4.5 0.5H68.5L73.5 17" fill="#f0f0f0" stroke="#a0a0a0"/></svg>
<div class="t" style="left:42px;top:417px;font-size:11px;color:#000;;transform:scaleX(0.9822);transform-origin:0 0;">Властивості</div>
<div class="a" style="left:29px;top:430px;width:160px;height:194px;background:#fff;border:1px solid #a0a0a0"></div>
<div class="a" style="left:30px;top:431px;width:141px;height:192px;overflow:hidden">
<div class="a" style="left:0;top:0;width:76px;height:16px;background:#f0f0f0"></div>
<div class="a" style="left:0;top:16px;width:141px;height:1px;background:#f0f0f0"></div>
<div class="a" style="left:14px;top:4px;width:61px;height:13px;overflow:hidden"><div class="t" style="left:0;top:0;font-size:10.5px;color:#000">Align</div></div>
<div class="t" style="left:78px;top:4px;font-size:10.5px;color:#000">baNone</div>
<div class="a" style="left:0;top:32px;width:141px;height:1px;background:#f0f0f0"></div>
<div class="a" style="left:14px;top:20px;width:61px;height:13px;overflow:hidden"><div class="t" style="left:0;top:0;font-size:10.5px;color:#000">AllowExpress</div></div>
<svg class="a" style="left:78px;top:19px" width="11" height="11"><rect x="0.5" y="0.5" width="10" height="10" fill="#fff" stroke="#333"/><path d="M2 5L4.5 8L9 2" fill="none" stroke="#000" stroke-width="1.5"/></svg>
<div class="t" style="left:92px;top:20px;font-size:10.5px;color:#000080">True</div>
<div class="a" style="left:0;top:48px;width:141px;height:1px;background:#f0f0f0"></div>
<div class="a" style="left:14px;top:36px;width:61px;height:13px;overflow:hidden"><div class="t" style="left:0;top:0;font-size:10.5px;color:#000">AllowHTMLTa</div></div>
<svg class="a" style="left:78px;top:35px" width="11" height="11"><rect x="0.5" y="0.5" width="10" height="10" fill="#fff" stroke="#333"/></svg>
<div class="t" style="left:92px;top:36px;font-size:10.5px;color:#000080">False</div>
<div class="a" style="left:0;top:64px;width:141px;height:1px;background:#f0f0f0"></div>
<div class="a" style="left:14px;top:52px;width:61px;height:13px;overflow:hidden"><div class="t" style="left:0;top:0;font-size:10.5px;color:#000">AutoWidth</div></div>
<svg class="a" style="left:78px;top:51px" width="11" height="11"><rect x="0.5" y="0.5" width="10" height="10" fill="#fff" stroke="#333"/></svg>
<div class="t" style="left:92px;top:52px;font-size:10.5px;color:#000080">False</div>
<div class="a" style="left:0;top:80px;width:141px;height:1px;background:#f0f0f0"></div>
<div class="a" style="left:14px;top:68px;width:61px;height:13px;overflow:hidden"><div class="t" style="left:0;top:0;font-size:10.5px;color:#000">BrushStyle</div></div>
<div class="a" style="left:78px;top:67px;width:11px;height:11px;background:#000;border:1px solid #333"></div>
<div class="t" style="left:92px;top:68px;font-size:10.5px;color:#000080">bsSolid</div>
<div class="a" style="left:0;top:96px;width:141px;height:1px;background:#f0f0f0"></div>
<div class="a" style="left:14px;top:84px;width:61px;height:13px;overflow:hidden"><div class="t" style="left:0;top:0;font-size:10.5px;color:#000">CharSpacing</div></div>
<div class="t" style="left:78px;top:84px;font-size:10.5px;color:#000080">0</div>
<div class="a" style="left:0;top:112px;width:141px;height:1px;background:#f0f0f0"></div>
<div class="a" style="left:14px;top:100px;width:61px;height:13px;overflow:hidden"><div class="t" style="left:0;top:0;font-size:10.5px;color:#000">Clipped</div></div>
<svg class="a" style="left:78px;top:99px" width="11" height="11"><rect x="0.5" y="0.5" width="10" height="10" fill="#fff" stroke="#333"/><path d="M2 5L4.5 8L9 2" fill="none" stroke="#000" stroke-width="1.5"/></svg>
<div class="t" style="left:92px;top:100px;font-size:10.5px;color:#000080">True</div>
<div class="a" style="left:0;top:128px;width:141px;height:1px;background:#f0f0f0"></div>
<div class="a" style="left:14px;top:116px;width:61px;height:13px;overflow:hidden"><div class="t" style="left:0;top:0;font-size:10.5px;color:#000">Color</div></div>
<div class="a" style="left:78px;top:115px;width:11px;height:11px;background:#000;border:1px solid #333"></div>
<div class="t" style="left:92px;top:116px;font-size:10.5px;color:#000080">clNone</div>
<div class="a" style="left:0;top:144px;width:141px;height:1px;background:#f0f0f0"></div>
<div class="a" style="left:14px;top:132px;width:61px;height:13px;overflow:hidden"><div class="t" style="left:0;top:0;font-size:10.5px;color:#000">Cursor</div></div>
<div class="t" style="left:78px;top:132px;font-size:10.5px;color:#000080">crDefault</div>
<div class="a" style="left:0;top:160px;width:141px;height:1px;background:#f0f0f0"></div>
<div class="a" style="left:14px;top:148px;width:61px;height:13px;overflow:hidden"><div class="t" style="left:0;top:0;font-size:10.5px;color:#000">DataField</div></div>
<div class="t" style="left:78px;top:148px;font-size:10.5px;color:#000080">Підготовка</div>
<div class="a" style="left:0;top:176px;width:141px;height:1px;background:#f0f0f0"></div>
<div class="a" style="left:14px;top:164px;width:61px;height:13px;overflow:hidden"><div class="t" style="left:0;top:0;font-size:10.5px;color:#000">DataSet</div></div>
<div class="t" style="left:78px;top:164px;font-size:10.5px;color:#000080">Чек комірник</div>
<div class="a" style="left:0;top:192px;width:141px;height:1px;background:#f0f0f0"></div>
<div class="a" style="left:14px;top:180px;width:61px;height:13px;overflow:hidden"><div class="t" style="left:0;top:0;font-size:10.5px;color:#000">Description</div></div>
</div>
<div class="a" style="left:105px;top:431px;width:1px;height:192px;background:#f0f0f0"></div>
<div class="a" style="left:155px;top:432px;width:15px;height:15px;background:#e0e0e0;border:1px solid #a0a0a0"></div>
<svg class="a" style="left:158px;top:438px;" width="8" height="4" viewBox="0 0 8 4"><path d="M0 0H8L4 4Z" fill="#000"/></svg>
<div class="a" style="left:171px;top:431px;width:17px;height:192px;background:#f0f0f0"></div>
<div class="a" style="left:172px;top:449px;width:15px;height:36px;background:#cdcdcd"></div>
<svg class="a" style="left:175px;top:437px;" width="8" height="5" viewBox="0 0 8 5"><path d="M0.5 4.5L4 1L7.5 4.5" fill="none" stroke="#606060" stroke-width="1.5"/></svg>
<svg class="a" style="left:175px;top:611px;" width="8" height="5" viewBox="0 0 8 5"><path d="M0.5 0.5L4 4L7.5 0.5" fill="none" stroke="#606060" stroke-width="1.5"/></svg>
<div class="a" style="left:29px;top:627px;width:160px;height:65px;background:#fff;border:1px solid #a0a0a0"></div>
<div class="t" style="left:31px;top:631px;font-size:11px;color:#000;"><b>Align</b></div>
<div class="t" style="left:31px;top:647px;font-size:11px;color:#000;">Вирівнювання об'єкта щодо</div>
<div class="t" style="left:31px;top:660px;font-size:11px;color:#000;">батька</div>
<div class="a" style="left:189px;top:397px;width:6px;height:29px;background:#d4d4c4"></div>
<svg class="a" style="left:190px;top:401px" width="4" height="4"><circle cx="2" cy="2" r="1.5" fill="#707070"/><circle cx="1.6" cy="1.6" r="0.8" fill="#fff"/></svg>
<svg class="a" style="left:190px;top:404px" width="4" height="4"><circle cx="2" cy="2" r="1.5" fill="#707070"/><circle cx="1.6" cy="1.6" r="0.8" fill="#fff"/></svg>
<svg class="a" style="left:190px;top:407px" width="4" height="4"><circle cx="2" cy="2" r="1.5" fill="#707070"/><circle cx="1.6" cy="1.6" r="0.8" fill="#fff"/></svg>
<svg class="a" style="left:190px;top:410px" width="4" height="4"><circle cx="2" cy="2" r="1.5" fill="#707070"/><circle cx="1.6" cy="1.6" r="0.8" fill="#fff"/></svg>
<svg class="a" style="left:190px;top:413px" width="4" height="4"><circle cx="2" cy="2" r="1.5" fill="#707070"/><circle cx="1.6" cy="1.6" r="0.8" fill="#fff"/></svg>
<svg class="a" style="left:190px;top:416px" width="4" height="4"><circle cx="2" cy="2" r="1.5" fill="#707070"/><circle cx="1.6" cy="1.6" r="0.8" fill="#fff"/></svg>
<svg class="a" style="left:190px;top:419px" width="4" height="4"><circle cx="2" cy="2" r="1.5" fill="#707070"/><circle cx="1.6" cy="1.6" r="0.8" fill="#fff"/></svg>
<div class="a" style="left:652px;top:397px;width:6px;height:29px;background:#d4d4c4"></div>
<svg class="a" style="left:653px;top:401px" width="4" height="4"><circle cx="2" cy="2" r="1.5" fill="#707070"/><circle cx="1.6" cy="1.6" r="0.8" fill="#fff"/></svg>
<svg class="a" style="left:653px;top:404px" width="4" height="4"><circle cx="2" cy="2" r="1.5" fill="#707070"/><circle cx="1.6" cy="1.6" r="0.8" fill="#fff"/></svg>
<svg class="a" style="left:653px;top:407px" width="4" height="4"><circle cx="2" cy="2" r="1.5" fill="#707070"/><circle cx="1.6" cy="1.6" r="0.8" fill="#fff"/></svg>
<svg class="a" style="left:653px;top:410px" width="4" height="4"><circle cx="2" cy="2" r="1.5" fill="#707070"/><circle cx="1.6" cy="1.6" r="0.8" fill="#fff"/></svg>
<svg class="a" style="left:653px;top:413px" width="4" height="4"><circle cx="2" cy="2" r="1.5" fill="#707070"/><circle cx="1.6" cy="1.6" r="0.8" fill="#fff"/></svg>
<svg class="a" style="left:653px;top:416px" width="4" height="4"><circle cx="2" cy="2" r="1.5" fill="#707070"/><circle cx="1.6" cy="1.6" r="0.8" fill="#fff"/></svg>
<svg class="a" style="left:653px;top:419px" width="4" height="4"><circle cx="2" cy="2" r="1.5" fill="#707070"/><circle cx="1.6" cy="1.6" r="0.8" fill="#fff"/></svg>
<div class="a" style="left:255px;top:134px;width:397px;height:14px;background:#fff"></div>
<div class="a" style="left:198px;top:172px;width:13px;height:520px;background:#fff"></div>
<div class="a" style="left:262px;top:139px;width:1px;height:2px;background:#000"></div>
<div class="a" style="left:269px;top:139px;width:1px;height:2px;background:#000"></div>
<div class="a" style="left:275px;top:139px;width:1px;height:2px;background:#000"></div>
<div class="a" style="left:282px;top:139px;width:1px;height:2px;background:#000"></div>
<div class="a" style="left:289px;top:138px;width:1px;height:4px;background:#000"></div>
<div class="a" style="left:296px;top:139px;width:1px;height:2px;background:#000"></div>
<div class="a" style="left:303px;top:139px;width:1px;height:2px;background:#000"></div>
<div class="a" style="left:309px;top:139px;width:1px;height:2px;background:#000"></div>
<div class="a" style="left:316px;top:139px;width:1px;height:2px;background:#000"></div>
<div class="t" style="left:313px;top:136px;width:21px;text-align:center;font-size:9.5px">1</div>
<div class="a" style="left:330px;top:139px;width:1px;height:2px;background:#000"></div>
<div class="a" style="left:337px;top:139px;width:1px;height:2px;background:#000"></div>
<div class="a" style="left:343px;top:139px;width:1px;height:2px;background:#000"></div>
<div class="a" style="left:350px;top:139px;width:1px;height:2px;background:#000"></div>
<div class="a" style="left:357px;top:138px;width:1px;height:4px;background:#000"></div>
<div class="a" style="left:364px;top:139px;width:1px;height:2px;background:#000"></div>
<div class="a" style="left:371px;top:139px;width:1px;height:2px;background:#000"></div>
<div class="a" style="left:377px;top:139px;width:1px;height:2px;background:#000"></div>
<div class="a" style="left:384px;top:139px;width:1px;height:2px;background:#000"></div>
<div class="t" style="left:381px;top:136px;width:21px;text-align:center;font-size:9.5px">2</div>
<div class="a" style="left:398px;top:139px;width:1px;height:2px;background:#000"></div>
<div class="a" style="left:405px;top:139px;width:1px;height:2px;background:#000"></div>
<div class="a" style="left:411px;top:139px;width:1px;height:2px;background:#000"></div>
<div class="a" style="left:418px;top:139px;width:1px;height:2px;background:#000"></div>
<div class="a" style="left:425px;top:138px;width:1px;height:4px;background:#000"></div>
<div class="a" style="left:432px;top:139px;width:1px;height:2px;background:#000"></div>
<div class="a" style="left:439px;top:139px;width:1px;height:2px;background:#000"></div>
<div class="a" style="left:445px;top:139px;width:1px;height:2px;background:#000"></div>
<div class="a" style="left:452px;top:139px;width:1px;height:2px;background:#000"></div>
<div class="t" style="left:449px;top:136px;width:21px;text-align:center;font-size:9.5px">3</div>
<div class="a" style="left:466px;top:139px;width:1px;height:2px;background:#000"></div>
<div class="a" style="left:473px;top:139px;width:1px;height:2px;background:#000"></div>
<div class="a" style="left:479px;top:139px;width:1px;height:2px;background:#000"></div>
<div class="a" style="left:486px;top:139px;width:1px;height:2px;background:#000"></div>
<div class="a" style="left:493px;top:138px;width:1px;height:4px;background:#000"></div>
<div class="a" style="left:500px;top:139px;width:1px;height:2px;background:#000"></div>
<div class="a" style="left:507px;top:139px;width:1px;height:2px;background:#000"></div>
<div class="a" style="left:514px;top:139px;width:1px;height:2px;background:#000"></div>
<div class="a" style="left:520px;top:139px;width:1px;height:2px;background:#000"></div>
<div class="t" style="left:517px;top:136px;width:21px;text-align:center;font-size:9.5px">4</div>
<div class="a" style="left:534px;top:139px;width:1px;height:2px;background:#000"></div>
<div class="a" style="left:541px;top:139px;width:1px;height:2px;background:#000"></div>
<div class="a" style="left:548px;top:139px;width:1px;height:2px;background:#000"></div>
<div class="a" style="left:554px;top:139px;width:1px;height:2px;background:#000"></div>
<div class="a" style="left:561px;top:138px;width:1px;height:4px;background:#000"></div>
<div class="a" style="left:568px;top:139px;width:1px;height:2px;background:#000"></div>
<div class="a" style="left:575px;top:139px;width:1px;height:2px;background:#000"></div>
<div class="a" style="left:582px;top:139px;width:1px;height:2px;background:#000"></div>
<div class="a" style="left:588px;top:139px;width:1px;height:2px;background:#000"></div>
<div class="t" style="left:585px;top:136px;width:21px;text-align:center;font-size:9.5px">5</div>
<div class="a" style="left:602px;top:139px;width:1px;height:2px;background:#000"></div>
<div class="a" style="left:609px;top:139px;width:1px;height:2px;background:#000"></div>
<div class="a" style="left:616px;top:139px;width:1px;height:2px;background:#000"></div>
<div class="a" style="left:622px;top:139px;width:1px;height:2px;background:#000"></div>
<div class="a" style="left:629px;top:138px;width:1px;height:4px;background:#000"></div>
<div class="a" style="left:636px;top:139px;width:1px;height:2px;background:#000"></div>
<div class="a" style="left:643px;top:139px;width:1px;height:2px;background:#000"></div>
<div class="a" style="left:650px;top:139px;width:1px;height:2px;background:#000"></div>
<div class="a" style="left:514px;top:134px;width:2px;height:13px;background:#000"></div>
<div class="a" style="left:198px;top:172px;width:13px;height:1px;background:#000"></div>
<div class="a" style="left:203px;top:179px;width:3px;height:1px;background:#000"></div>
<div class="a" style="left:203px;top:186px;width:3px;height:1px;background:#000"></div>
<div class="a" style="left:203px;top:192px;width:3px;height:1px;background:#000"></div>
<div class="a" style="left:203px;top:199px;width:3px;height:1px;background:#000"></div>
<div class="a" style="left:202px;top:206px;width:5px;height:1px;background:#000"></div>
<div class="a" style="left:203px;top:213px;width:3px;height:1px;background:#000"></div>
<div class="a" style="left:203px;top:220px;width:3px;height:1px;background:#000"></div>
<div class="a" style="left:203px;top:226px;width:3px;height:1px;background:#000"></div>
<div class="a" style="left:203px;top:233px;width:3px;height:1px;background:#000"></div>
<div class="t" style="left:193px;top:235px;width:21px;text-align:center;font-size:9.5px;transform:rotate(-90deg);transform-origin:50% 5px">1</div>
<div class="a" style="left:203px;top:247px;width:3px;height:1px;background:#000"></div>
<div class="a" style="left:203px;top:254px;width:3px;height:1px;background:#000"></div>
<div class="a" style="left:203px;top:260px;width:3px;height:1px;background:#000"></div>
<div class="a" style="left:203px;top:267px;width:3px;height:1px;background:#000"></div>
<div class="a" style="left:202px;top:274px;width:5px;height:1px;background:#000"></div>
<div class="a" style="left:203px;top:281px;width:3px;height:1px;background:#000"></div>
<div class="a" style="left:203px;top:288px;width:3px;height:1px;background:#000"></div>
<div class="a" style="left:203px;top:294px;width:3px;height:1px;background:#000"></div>
<div class="a" style="left:203px;top:301px;width:3px;height:1px;background:#000"></div>
<div class="t" style="left:193px;top:303px;width:21px;text-align:center;font-size:9.5px;transform:rotate(-90deg);transform-origin:50% 5px">2</div>
<div class="a" style="left:203px;top:315px;width:3px;height:1px;background:#000"></div>
<div class="a" style="left:203px;top:322px;width:3px;height:1px;background:#000"></div>
<div class="a" style="left:203px;top:328px;width:3px;height:1px;background:#000"></div>
<div class="a" style="left:203px;top:335px;width:3px;height:1px;background:#000"></div>
<div class="a" style="left:202px;top:342px;width:5px;height:1px;background:#000"></div>
<div class="a" style="left:203px;top:349px;width:3px;height:1px;background:#000"></div>
<div class="a" style="left:203px;top:356px;width:3px;height:1px;background:#000"></div>
<div class="a" style="left:203px;top:362px;width:3px;height:1px;background:#000"></div>
<div class="a" style="left:203px;top:369px;width:3px;height:1px;background:#000"></div>
<div class="t" style="left:193px;top:371px;width:21px;text-align:center;font-size:9.5px;transform:rotate(-90deg);transform-origin:50% 5px">3</div>
<div class="a" style="left:203px;top:383px;width:3px;height:1px;background:#000"></div>
<div class="a" style="left:203px;top:390px;width:3px;height:1px;background:#000"></div>
<div class="a" style="left:203px;top:396px;width:3px;height:1px;background:#000"></div>
<div class="a" style="left:203px;top:403px;width:3px;height:1px;background:#000"></div>
<div class="a" style="left:202px;top:410px;width:5px;height:1px;background:#000"></div>
<div class="a" style="left:203px;top:417px;width:3px;height:1px;background:#000"></div>
<div class="a" style="left:203px;top:424px;width:3px;height:1px;background:#000"></div>
<div class="a" style="left:203px;top:431px;width:3px;height:1px;background:#000"></div>
<div class="a" style="left:203px;top:437px;width:3px;height:1px;background:#000"></div>
<div class="t" style="left:193px;top:439px;width:21px;text-align:center;font-size:9.5px;transform:rotate(-90deg);transform-origin:50% 5px">4</div>
<div class="a" style="left:203px;top:451px;width:3px;height:1px;background:#000"></div>
<div class="a" style="left:203px;top:458px;width:3px;height:1px;background:#000"></div>
<div class="a" style="left:203px;top:465px;width:3px;height:1px;background:#000"></div>
<div class="a" style="left:203px;top:471px;width:3px;height:1px;background:#000"></div>
<div class="a" style="left:202px;top:478px;width:5px;height:1px;background:#000"></div>
<div class="a" style="left:203px;top:485px;width:3px;height:1px;background:#000"></div>
<div class="a" style="left:203px;top:492px;width:3px;height:1px;background:#000"></div>
<div class="a" style="left:203px;top:499px;width:3px;height:1px;background:#000"></div>
<div class="a" style="left:203px;top:505px;width:3px;height:1px;background:#000"></div>
<div class="t" style="left:193px;top:507px;width:21px;text-align:center;font-size:9.5px;transform:rotate(-90deg);transform-origin:50% 5px">5</div>
<div class="a" style="left:203px;top:519px;width:3px;height:1px;background:#000"></div>
<div class="a" style="left:203px;top:526px;width:3px;height:1px;background:#000"></div>
<div class="a" style="left:203px;top:533px;width:3px;height:1px;background:#000"></div>
<div class="a" style="left:203px;top:539px;width:3px;height:1px;background:#000"></div>
<div class="a" style="left:202px;top:546px;width:5px;height:1px;background:#000"></div>
<div class="a" style="left:203px;top:553px;width:3px;height:1px;background:#000"></div>
<div class="a" style="left:203px;top:560px;width:3px;height:1px;background:#000"></div>
<div class="a" style="left:203px;top:567px;width:3px;height:1px;background:#000"></div>
<div class="a" style="left:203px;top:573px;width:3px;height:1px;background:#000"></div>
<div class="t" style="left:193px;top:575px;width:21px;text-align:center;font-size:9.5px;transform:rotate(-90deg);transform-origin:50% 5px">6</div>
<div class="a" style="left:203px;top:587px;width:3px;height:1px;background:#000"></div>
<div class="a" style="left:203px;top:594px;width:3px;height:1px;background:#000"></div>
<div class="a" style="left:203px;top:601px;width:3px;height:1px;background:#000"></div>
<div class="a" style="left:203px;top:607px;width:3px;height:1px;background:#000"></div>
<div class="a" style="left:202px;top:614px;width:5px;height:1px;background:#000"></div>
<div class="a" style="left:203px;top:621px;width:3px;height:1px;background:#000"></div>
<div class="a" style="left:203px;top:628px;width:3px;height:1px;background:#000"></div>
<div class="a" style="left:203px;top:635px;width:3px;height:1px;background:#000"></div>
<div class="a" style="left:203px;top:641px;width:3px;height:1px;background:#000"></div>
<div class="t" style="left:193px;top:643px;width:21px;text-align:center;font-size:9.5px;transform:rotate(-90deg);transform-origin:50% 5px">7</div>
<div class="a" style="left:203px;top:655px;width:3px;height:1px;background:#000"></div>
<div class="a" style="left:203px;top:662px;width:3px;height:1px;background:#000"></div>
<div class="a" style="left:203px;top:669px;width:3px;height:1px;background:#000"></div>
<div class="a" style="left:203px;top:675px;width:3px;height:1px;background:#000"></div>
<div class="a" style="left:202px;top:682px;width:5px;height:1px;background:#000"></div>
<div class="a" style="left:203px;top:689px;width:3px;height:1px;background:#000"></div>
<div class="a" style="left:216px;top:153px;width:436px;height:539px;background:#808080"></div>
<div class="a" style="left:226px;top:163px;width:386px;height:489px;background:#fff;border:1px solid #505050"></div>
<div class="a" style="left:612px;top:164px;width:1px;height:489px;background:#5a5a5a"></div>
<div class="a" style="left:227px;top:652px;width:386px;height:1px;background:#5a5a5a"></div>
<div class="a" style="left:253px;top:171px;width:1px;height:476px;background:#ebebeb"></div>
<div class="a" style="left:287px;top:171px;width:1px;height:476px;background:#ebebeb"></div>
<div class="a" style="left:321px;top:171px;width:1px;height:476px;background:#ebebeb"></div>
<div class="a" style="left:355px;top:171px;width:1px;height:476px;background:#ebebeb"></div>
<div class="a" style="left:389px;top:171px;width:1px;height:476px;background:#ebebeb"></div>
<div class="a" style="left:423px;top:171px;width:1px;height:476px;background:#ebebeb"></div>
<div class="a" style="left:457px;top:171px;width:1px;height:476px;background:#ebebeb"></div>
<div class="a" style="left:491px;top:171px;width:1px;height:476px;background:#ebebeb"></div>
<div class="a" style="left:525px;top:171px;width:1px;height:476px;background:#ebebeb"></div>
<div class="a" style="left:559px;top:171px;width:1px;height:476px;background:#ebebeb"></div>
<div class="a" style="left:253px;top:204px;width:334px;height:1px;background:#ebebeb"></div>
<div class="a" style="left:253px;top:238px;width:334px;height:1px;background:#ebebeb"></div>
<div class="a" style="left:253px;top:272px;width:334px;height:1px;background:#ebebeb"></div>
<div class="a" style="left:253px;top:306px;width:334px;height:1px;background:#ebebeb"></div>
<div class="a" style="left:253px;top:340px;width:334px;height:1px;background:#ebebeb"></div>
<div class="a" style="left:253px;top:374px;width:334px;height:1px;background:#ebebeb"></div>
<div class="a" style="left:253px;top:408px;width:334px;height:1px;background:#ebebeb"></div>
<div class="a" style="left:253px;top:442px;width:334px;height:1px;background:#ebebeb"></div>
<div class="a" style="left:253px;top:476px;width:334px;height:1px;background:#ebebeb"></div>
<div class="a" style="left:253px;top:510px;width:334px;height:1px;background:#ebebeb"></div>
<div class="a" style="left:253px;top:544px;width:334px;height:1px;background:#ebebeb"></div>
<div class="a" style="left:253px;top:578px;width:334px;height:1px;background:#ebebeb"></div>
<div class="a" style="left:253px;top:612px;width:334px;height:1px;background:#ebebeb"></div>
<div class="a" style="left:253px;top:646px;width:334px;height:1px;background:#ebebeb"></div>
<div class="a" style="left:252px;top:170px;width:336px;height:477px;border:1px dashed #a8a8a8;border-right:none"></div>
<div class="a" style="left:253px;top:170px;width:334px;height:103px;border:1px solid #a0a0a0"></div>
<div class="a" style="left:253px;top:170px;width:334px;height:33px;background:#efefef;border:1px solid #a0a0a0;border-bottom:none"></div>
<div class="t" style="left:260px;top:175px;font-size:18px;color:#000;-webkit-text-stroke:0.45px #000;transform:scaleX(1.1125);transform-origin:0 0;"><b>ReportTitle:</b></div>
<div class="t" style="left:381px;top:175px;font-size:18px;color:#000;;transform:scaleX(1.0167);transform-origin:0 0;">ReportTitle1</div>
<div class="a" style="left:253px;top:204px;width:6px;height:1px;background:#000"></div>
<div class="a" style="left:253px;top:204px;width:1px;height:6px;background:#000"></div>
<div class="a" style="left:581px;top:204px;width:6px;height:1px;background:#000"></div>
<div class="a" style="left:586px;top:204px;width:1px;height:6px;background:#000"></div>
<div class="a" style="left:253px;top:238px;width:6px;height:1px;background:#000"></div>
<div class="a" style="left:253px;top:233px;width:1px;height:6px;background:#000"></div>
<div class="a" style="left:581px;top:238px;width:6px;height:1px;background:#000"></div>
<div class="a" style="left:586px;top:233px;width:1px;height:6px;background:#000"></div>
<div class="t" style="left:320px;top:207px;font-size:24px;color:#000;;transform:scaleX(0.9779);transform-origin:0 0;">Чек для комірника</div>
<div class="a" style="left:321px;top:245px;width:6px;height:1px;background:#000"></div>
<div class="a" style="left:321px;top:245px;width:1px;height:6px;background:#000"></div>
<div class="a" style="left:581px;top:245px;width:6px;height:1px;background:#000"></div>
<div class="a" style="left:586px;top:245px;width:1px;height:6px;background:#000"></div>
<div class="a" style="left:321px;top:272px;width:6px;height:1px;background:#000"></div>
<div class="a" style="left:321px;top:267px;width:1px;height:6px;background:#000"></div>
<div class="a" style="left:581px;top:272px;width:6px;height:1px;background:#000"></div>
<div class="a" style="left:586px;top:267px;width:1px;height:6px;background:#000"></div>
<div class="t" style="left:471px;top:248px;font-size:18px;color:#000;;transform:scaleX(1.0790);transform-origin:0 0;"><i>[Date] [Time]</i></div>
<div class="a" style="left:253px;top:280px;width:334px;height:62px;border:1px solid #a0a0a0"></div>
<div class="a" style="left:253px;top:280px;width:334px;height:33px;background:#efefef;border:1px solid #a0a0a0;border-bottom:none"></div>
<div class="t" style="left:260px;top:285px;font-size:18px;color:#000;-webkit-text-stroke:0.45px #000;transform:scaleX(1.0969);transform-origin:0 0;"><b>ColumnHeader:</b></div>
<div class="t" style="left:413px;top:285px;font-size:18px;color:#000;;transform:scaleX(1.0223);transform-origin:0 0;">ColumnHeader1</div>
<div class="a" style="left:253px;top:312px;width:334px;height:29px;border:2px solid #000"></div>
<div class="a" style="left:368px;top:312px;width:2px;height:29px;background:#000"></div>
<div class="a" style="left:450px;top:312px;width:2px;height:29px;background:#000"></div>
<div class="a" style="left:511px;top:312px;width:2px;height:29px;background:#000"></div>
<div class="t" style="left:287px;top:319px;font-size:16px;color:#000;;transform:scaleX(1.0460);transform-origin:0 0;"><b>Товар</b></div>
<div class="t" style="left:393px;top:314px;font-size:10.5px;color:#000;;transform:scaleX(1.1405);transform-origin:0 0;"><b>Місце</b></div>
<div class="t" style="left:377px;top:328px;font-size:10.5px;color:#000;;transform:scaleX(1.2042);transform-origin:0 0;"><b>зберігання</b></div>
<div class="t" style="left:460px;top:319px;font-size:16px;color:#000;;transform:scaleX(1.0079);transform-origin:0 0;"><b>К-сть</b></div>
<div class="t" style="left:517px;top:321px;font-size:12px;color:#000;;transform:scaleX(0.9913);transform-origin:0 0;"><b>Підготовка</b></div>
<div class="a" style="left:253px;top:415px;width:334px;height:123px;border:1px solid #a0a0a0"></div>
<div class="a" style="left:253px;top:415px;width:334px;height:34px;background:#e2a938;border:1px solid #a0a0a0;border-bottom:none"></div>
<div class="t" style="left:260px;top:421px;font-size:18px;color:#000;-webkit-text-stroke:0.45px #000;transform:scaleX(1.0966);transform-origin:0 0;"><b>MasterData:</b></div>
<div class="t" style="left:382px;top:421px;font-size:18px;color:#000;;transform:scaleX(0.9704);transform-origin:0 0;">MasterData1</div>
<div class="a" style="left:456px;top:416px;width:130px;height:33px;background:#e2a938"></div>
<div class="t" style="left:458px;top:421px;font-size:18px;color:#000;;transform:scaleX(1.0541);transform-origin:0 0;">Чек комірника</div>
<svg class="a" style="left:439px;top:419px;" width="14" height="16" viewBox="0 0 14 16"><defs><linearGradient id="cyl" x1="0" x2="1"><stop offset="0" stop-color="#f8e8a0"/><stop offset="0.5" stop-color="#f0d060"/><stop offset="1" stop-color="#d8a020"/></linearGradient></defs><path d="M1 3V13Q7 16 13 13V3Z" fill="url(#cyl)" stroke="#b8a060" stroke-width="0.8"/><ellipse cx="7" cy="3" rx="6" ry="2.4" fill="#fff8d0" stroke="#b8a060" stroke-width="0.8"/></svg>
<div class="a" style="left:253px;top:449px;width:334px;height:89px;border:1px solid #000;background:transparent"></div>
<div class="a" style="left:253px;top:469px;width:334px;height:1px;background:#9a9a9a"></div>
<div class="a" style="left:451px;top:449px;width:1px;height:89px;background:#000"></div>
<div class="a" style="left:512px;top:449px;width:1px;height:89px;background:#000"></div>
<div class="t" style="left:257px;top:453.0px;font-size:13px;font-weight:bold;-webkit-text-stroke:0.12px #000;transform:scaleX(1.1);transform-origin:0 0">[Чек</div>
<div class="t" style="left:257px;top:471.1px;font-size:13px;font-weight:bold;-webkit-text-stroke:0.12px #000;transform:scaleX(1.1);transform-origin:0 0">комірника."То</div>
<div class="t" style="left:257px;top:489.2px;font-size:13px;font-weight:bold;-webkit-text-stroke:0.12px #000;transform:scaleX(1.1);transform-origin:0 0">вар"]</div>
<div class="t" style="left:370px;top:453.0px;width:81px;text-align:center;font-size:13px;font-weight:bold;-webkit-text-stroke:0.12px #000;transform:scaleX(1.1);transform-origin:50% 0">[Чек</div>
<div class="t" style="left:370px;top:471.1px;width:81px;text-align:center;font-size:13px;font-weight:bold;-webkit-text-stroke:0.12px #000;transform:scaleX(1.1);transform-origin:50% 0">комірника.</div>
<div class="t" style="left:370px;top:489.2px;width:81px;text-align:center;font-size:13px;font-weight:bold;-webkit-text-stroke:0.12px #000;transform:scaleX(1.1);transform-origin:50% 0">"Місце</div>
<div class="t" style="left:370px;top:507.3px;width:81px;text-align:center;font-size:13px;font-weight:bold;-webkit-text-stroke:0.12px #000;transform:scaleX(1.1);transform-origin:50% 0">зберігання</div>
<div class="t" style="left:370px;top:525.4px;width:81px;text-align:center;font-size:13px;font-weight:bold;-webkit-text-stroke:0.12px #000;transform:scaleX(1.1);transform-origin:50% 0">"]</div>
<div class="t" style="left:452px;top:453.0px;width:60px;text-align:center;font-size:13px;font-weight:bold;-webkit-text-stroke:0.12px #000;transform:scaleX(1.1);transform-origin:50% 0">[Чек</div>
<div class="t" style="left:452px;top:471.1px;width:60px;text-align:center;font-size:13px;font-weight:bold;-webkit-text-stroke:0.12px #000;transform:scaleX(1.1);transform-origin:50% 0">комірн</div>
<div class="t" style="left:452px;top:489.2px;width:60px;text-align:center;font-size:13px;font-weight:bold;-webkit-text-stroke:0.12px #000;transform:scaleX(1.1);transform-origin:50% 0">ика."Кі</div>
<div class="t" style="left:452px;top:507.3px;width:60px;text-align:center;font-size:13px;font-weight:bold;-webkit-text-stroke:0.12px #000;transform:scaleX(1.1);transform-origin:50% 0">лькість</div>
<div class="t" style="left:452px;top:525.4px;width:60px;text-align:center;font-size:13px;font-weight:bold;-webkit-text-stroke:0.12px #000;transform:scaleX(1.1);transform-origin:50% 0">"]</div>
<div class="t" style="left:516px;top:453.0px;font-size:13px;font-weight:bold;-webkit-text-stroke:0.12px #000;transform:scaleX(1.1);transform-origin:0 0">[Чек</div>
<div class="t" style="left:516px;top:471.1px;font-size:13px;font-weight:bold;-webkit-text-stroke:0.12px #000;transform:scaleX(1.1);transform-origin:0 0">комірник</div>
<div class="t" style="left:516px;top:489.2px;font-size:13px;font-weight:bold;-webkit-text-stroke:0.12px #000;transform:scaleX(1.1);transform-origin:0 0">а."Підгот</div>
<div class="t" style="left:516px;top:507.3px;font-size:13px;font-weight:bold;-webkit-text-stroke:0.12px #000;transform:scaleX(1.1);transform-origin:0 0">овка"]</div>
<div class="a" style="left:509px;top:446px;width:7px;height:2px;background:#2060d0"></div>
<div class="a" style="left:546px;top:446px;width:7px;height:2px;background:#2060d0"></div>
<div class="a" style="left:583px;top:446px;width:7px;height:2px;background:#2060d0"></div>
<div class="a" style="left:509px;top:449px;width:7px;height:6px;background:#000"></div>
<div class="a" style="left:512px;top:451px;width:1px;height:2px;background:#fff"></div>
<div class="a" style="left:546px;top:449px;width:7px;height:6px;background:#000"></div>
<div class="a" style="left:549px;top:451px;width:1px;height:2px;background:#fff"></div>
<div class="a" style="left:583px;top:449px;width:7px;height:6px;background:#000"></div>
<div class="a" style="left:586px;top:451px;width:1px;height:2px;background:#fff"></div>
<div class="a" style="left:509px;top:490px;width:7px;height:6px;background:#000"></div>
<div class="a" style="left:512px;top:492px;width:1px;height:2px;background:#fff"></div>
<div class="a" style="left:583px;top:490px;width:7px;height:6px;background:#000"></div>
<div class="a" style="left:586px;top:492px;width:1px;height:2px;background:#fff"></div>
<div class="a" style="left:509px;top:534px;width:7px;height:6px;background:#000"></div>
<div class="a" style="left:512px;top:536px;width:1px;height:2px;background:#fff"></div>
<div class="a" style="left:546px;top:534px;width:7px;height:6px;background:#000"></div>
<div class="a" style="left:549px;top:536px;width:1px;height:2px;background:#fff"></div>
<div class="a" style="left:583px;top:534px;width:7px;height:6px;background:#000"></div>
<div class="a" style="left:586px;top:536px;width:1px;height:2px;background:#fff"></div>
<div class="a" style="left:253px;top:544px;width:334px;height:56px;border:1px solid #a0a0a0"></div>
<div class="a" style="left:253px;top:544px;width:334px;height:33px;background:#efefef;border:1px solid #a0a0a0;border-bottom:none"></div>
<div class="t" style="left:260px;top:550px;font-size:18px;color:#000;-webkit-text-stroke:0.45px #000;transform:scaleX(1.0957);transform-origin:0 0;"><b>ReportSummary:</b></div>
<div class="t" style="left:427px;top:550px;font-size:18px;color:#000;;transform:scaleX(1.0280);transform-origin:0 0;">ReportSummary1</div>
<div class="a" style="left:253px;top:577px;width:6px;height:1px;background:#000"></div>
<div class="a" style="left:253px;top:577px;width:1px;height:6px;background:#000"></div>
<div class="a" style="left:336px;top:577px;width:6px;height:1px;background:#000"></div>
<div class="a" style="left:341px;top:577px;width:1px;height:6px;background:#000"></div>
<div class="a" style="left:253px;top:599px;width:6px;height:1px;background:#000"></div>
<div class="a" style="left:253px;top:594px;width:1px;height:6px;background:#000"></div>
<div class="a" style="left:336px;top:599px;width:6px;height:1px;background:#000"></div>
<div class="a" style="left:341px;top:594px;width:1px;height:6px;background:#000"></div>
<div class="t" style="left:258px;top:582px;font-size:13px;color:#000;;transform:scaleX(1.1037);transform-origin:0 0;"><b>Продавець</b></div>
<div class="a" style="left:348px;top:577px;width:6px;height:1px;background:#000"></div>
<div class="a" style="left:348px;top:577px;width:1px;height:6px;background:#000"></div>
<div class="a" style="left:567px;top:577px;width:6px;height:1px;background:#000"></div>
<div class="a" style="left:572px;top:577px;width:1px;height:6px;background:#000"></div>
<div class="a" style="left:348px;top:599px;width:6px;height:1px;background:#000"></div>
<div class="a" style="left:348px;top:594px;width:1px;height:6px;background:#000"></div>
<div class="a" style="left:567px;top:599px;width:6px;height:1px;background:#000"></div>
<div class="a" style="left:572px;top:594px;width:1px;height:6px;background:#000"></div>
<div class="t" style="left:352px;top:582px;font-size:13px;color:#000;;transform:scaleX(1.1201);transform-origin:0 0;"><b><i><u>[Продавец]</u></i></b></div>
<svg class="a" style="left:660px;top:133px" width="308" height="7"><defs><pattern id="gp660133" width="4" height="4" patternUnits="userSpaceOnUse"><rect x="0" y="0" width="2" height="2" fill="#c4c4c4"/></pattern></defs><rect width="308" height="7" fill="url(#gp660133)"/></svg>
<svg class="a" style="left:966px;top:132px;" width="11" height="10" viewBox="0 0 11 10"><rect x="0.5" y="0.5" width="10" height="9" fill="#e8a090" stroke="#70303a"/><path d="M2 2L9 8M9 2L2 8" stroke="#fff" stroke-width="1.5"/><path d="M5 5L9 8" stroke="#30305a" stroke-width="1"/></svg>
<svg class="a" style="left:658px;top:143px" width="319" height="20"><defs><pattern id="ht658_143" width="2" height="2" patternUnits="userSpaceOnUse"><rect width="2" height="2" fill="#fdfdfd"/><rect x="0" y="0" width="1" height="1" fill="#ebebeb"/><rect x="1" y="1" width="1" height="1" fill="#ebebeb"/></pattern></defs><rect width="319" height="20" fill="url(#ht658_143)"/></svg>
<div class="a" style="left:658px;top:163px;width:319px;height:1px;background:#a0a0a0"></div>
<svg class="a" style="left:721px;top:148px;" width="37" height="16" viewBox="0 0 37 16"><path d="M0.5 15.5L4.5 0.5H31.5L36.5 15.5" fill="#fff" stroke="#a0a0a0"/></svg>
<div class="t" style="left:723px;top:152px;font-size:11px;color:#000;;transform:scaleX(0.9120);transform-origin:0 0;">Змінні</div>
<svg class="a" style="left:757px;top:148px;" width="48" height="16" viewBox="0 0 48 16"><path d="M0.5 15.5L4.5 0.5H42.5L47.5 15.5" fill="#fff" stroke="#a0a0a0"/></svg>
<div class="t" style="left:762px;top:152px;font-size:11px;color:#000;;transform:scaleX(0.9791);transform-origin:0 0;">Функції</div>
<svg class="a" style="left:804px;top:148px;" width="40" height="16" viewBox="0 0 40 16"><path d="M0.5 15.5L4.5 0.5H34.5L39.5 15.5" fill="#fff" stroke="#a0a0a0"/></svg>
<div class="t" style="left:808px;top:152px;font-size:11px;color:#000;;transform:scaleX(0.9708);transform-origin:0 0;">Класи</div>
<svg class="a" style="left:665px;top:148px;" width="57" height="16" viewBox="0 0 57 16"><path d="M0.5 16L4.5 0.5H51.5L56.5 16" fill="#f0f0f0" stroke="#a0a0a0"/></svg>
<div class="t" style="left:671px;top:152px;font-size:11px;color:#000;;transform:scaleX(0.9433);transform-origin:0 0;">Поля БД</div>
<div class="a" style="left:658px;top:164px;width:319px;height:475px;background:#fff;border:1px solid #a0a0a0"></div>
<svg class="a" style="left:665px;top:168px;" width="12" height="13" viewBox="0 0 12 13"><defs><linearGradient id="cg665168" x1="0" x2="1"><stop offset="0" stop-color="#f4e08a"/><stop offset="0.45" stop-color="#f8e898"/><stop offset="1" stop-color="#c89010"/></linearGradient></defs><path d="M0.5 2.5V10.5Q6.0 13.5 11.5 10.5V2.5Z" fill="url(#cg665168)" stroke="#a08030" stroke-width="0.8"/><ellipse cx="6.0" cy="2.5" rx="5.5" ry="2" fill="#f8f0b0" stroke="#a08030" stroke-width="0.8"/></svg>
<div class="t" style="left:684px;top:168px;font-size:12px;color:#000;"><b>Дані</b></div>
<svg class="a" style="left:666px;top:186px;" width="8" height="5" viewBox="0 0 8 5"><path d="M0.5 0.5L4 4L7.5 0.5" fill="none" stroke="#404040" stroke-width="1.4"/></svg>
<div class="a" style="left:676px;top:190px;width:7px;height:1px;background:repeating-linear-gradient(90deg,#808080 0 1px,transparent 1px 2px)"></div>
<svg class="a" style="left:682px;top:182px;" width="10" height="13" viewBox="0 0 10 13"><defs><linearGradient id="cg682182" x1="0" x2="1"><stop offset="0" stop-color="#f4e08a"/><stop offset="0.45" stop-color="#f8e898"/><stop offset="1" stop-color="#c89010"/></linearGradient></defs><path d="M0.5 2.5V10.5Q5.0 13.5 9.5 10.5V2.5Z" fill="url(#cg682182)" stroke="#a08030" stroke-width="0.8"/><ellipse cx="5.0" cy="2.5" rx="4.5" ry="2" fill="#f8f0b0" stroke="#a08030" stroke-width="0.8"/></svg>
<svg class="a" style="left:689px;top:185px;" width="10" height="9" viewBox="0 0 10 9"><rect x="0.5" y="0.5" width="9" height="8" fill="#eef2fa" stroke="#3a4a8a"/><rect x="1" y="1" width="8" height="2" fill="#5a80e0"/><path d="M3 5H8M3 7H8" stroke="#3a4a8a" stroke-width="0.8"/></svg>
<svg class="a" style="left:686px;top:189px;" width="10" height="10" viewBox="0 0 10 10"><rect x="0.5" y="0.5" width="9" height="9" fill="#eef2fa" stroke="#3a4a8a"/><rect x="1" y="1" width="8" height="2" fill="#5a80e0"/><path d="M2.5 5H4.5M5.5 5H7.5M2.5 7.5H4.5M5.5 7.5H7.5" stroke="#3a4a8a" stroke-width="0.9"/></svg>
<div class="t" style="left:703px;top:184px;font-size:12px;color:#000;"><b>Чек комірника</b></div>
<div class="a" style="left:690px;top:197px;width:1px;height:73px;background:repeating-linear-gradient(#808080 0 1px,transparent 1px 2px)"></div>
<div class="a" style="left:691px;top:206px;width:11px;height:1px;background:repeating-linear-gradient(90deg,#808080 0 1px,transparent 1px 2px)"></div>
<svg class="a" style="left:704px;top:198px;" width="12" height="13" viewBox="0 0 12 13"><rect x="0.5" y="0.5" width="11" height="12" fill="#f8faff" stroke="#3a4a8a"/><rect x="1" y="1" width="10" height="2" fill="#6a8ae0"/><path d="M4 4.5H9M4 6.5H9M4 8.5H9M4 10.5H9" stroke="#505a70" stroke-width="0.9"/></svg>
<div class="t" style="left:721px;top:201px;font-size:11px;color:#000;">Кількість</div>
<div class="a" style="left:691px;top:222px;width:11px;height:1px;background:repeating-linear-gradient(90deg,#808080 0 1px,transparent 1px 2px)"></div>
<svg class="a" style="left:704px;top:214px;" width="12" height="13" viewBox="0 0 12 13"><rect x="0.5" y="0.5" width="11" height="12" fill="#f8faff" stroke="#3a4a8a"/><rect x="1" y="1" width="10" height="2" fill="#6a8ae0"/><path d="M4 4.5H9M4 6.5H9M4 8.5H9M4 10.5H9" stroke="#505a70" stroke-width="0.9"/></svg>
<div class="t" style="left:721px;top:217px;font-size:11px;color:#000;">Підготовка</div>
<div class="a" style="left:691px;top:238px;width:11px;height:1px;background:repeating-linear-gradient(90deg,#808080 0 1px,transparent 1px 2px)"></div>
<svg class="a" style="left:704px;top:230px;" width="12" height="13" viewBox="0 0 12 13"><rect x="0.5" y="0.5" width="11" height="12" fill="#f8faff" stroke="#3a4a8a"/><rect x="1" y="1" width="10" height="2" fill="#6a8ae0"/><path d="M4 4.5H9M4 6.5H9M4 8.5H9M4 10.5H9" stroke="#505a70" stroke-width="0.9"/></svg>
<div class="t" style="left:721px;top:233px;font-size:11px;color:#000;;transform:scaleX(1.0353);transform-origin:0 0;">К-сть штук метричного товару</div>
<div class="a" style="left:691px;top:254px;width:11px;height:1px;background:repeating-linear-gradient(90deg,#808080 0 1px,transparent 1px 2px)"></div>
<svg class="a" style="left:704px;top:246px;" width="12" height="13" viewBox="0 0 12 13"><rect x="0.5" y="0.5" width="11" height="12" fill="#f8faff" stroke="#3a4a8a"/><rect x="1" y="1" width="10" height="2" fill="#6a8ae0"/><path d="M4 4.5H9M4 6.5H9M4 8.5H9M4 10.5H9" stroke="#505a70" stroke-width="0.9"/></svg>
<div class="t" style="left:721px;top:249px;font-size:11px;color:#000;">Товар</div>
<div class="a" style="left:691px;top:270px;width:11px;height:1px;background:repeating-linear-gradient(90deg,#808080 0 1px,transparent 1px 2px)"></div>
<svg class="a" style="left:704px;top:262px;" width="12" height="13" viewBox="0 0 12 13"><rect x="0.5" y="0.5" width="11" height="12" fill="#f8faff" stroke="#3a4a8a"/><rect x="1" y="1" width="10" height="2" fill="#6a8ae0"/><path d="M4 4.5H9M4 6.5H9M4 8.5H9M4 10.5H9" stroke="#505a70" stroke-width="0.9"/></svg>
<div class="t" style="left:721px;top:265px;font-size:11px;color:#000;">Місце зберігання</div>
<div class="a" style="left:658px;top:645px;width:13px;height:13px;background:#fff;border:1px solid #333"></div>
<div class="t" style="left:674px;top:647px;font-size:11px;color:#000;">Вставляти поле</div>
<div class="a" style="left:658px;top:661px;width:13px;height:13px;background:#fff;border:1px solid #333"></div>
<div class="t" style="left:674px;top:663px;font-size:11px;color:#000;">Вставляти заголовок</div>
<div class="a" style="left:658px;top:677px;width:13px;height:13px;background:#fff;border:1px solid #333"></div>
<div class="t" style="left:674px;top:679px;font-size:11px;color:#000;">Сортировать по имени</div>
<svg class="a" style="left:660px;top:647px;" width="9" height="9" viewBox="0 0 9 9"><path d="M0.5 4.5L3.5 7.5L8.5 1" fill="none" stroke="#333" stroke-width="1.2"/></svg>
<svg class="a" style="left:0;top:0" width="980" height="713"><rect x="366.5" y="306.5" width="87" height="37" fill="none" stroke="#f00" stroke-width="3"/><rect x="369.5" y="442.5" width="84" height="103" fill="none" stroke="#f00" stroke-width="3"/><rect x="693.5" y="261" width="123" height="19" fill="none" stroke="#f00" stroke-width="3"/><path d="M694 281L465 435" stroke="#f00" stroke-width="3"/><path d="M455 442.5L461 430L469 440Z" fill="#f00"/></svg>
<div class="a" style="left:2px;top:692px;width:975px;height:1px;background:#d7d7d7"></div>
<div class="t" style="left:4px;top:697px;font-size:11px;color:#000;">Сантиметри</div>
<div class="a" style="left:76px;top:694px;width:1px;height:16px;background:#d7d7d7"></div>
<div class="a" style="left:86px;top:708px;width:1px;height:1px;background:#000"></div>
<div class="a" style="left:96px;top:698px;width:1px;height:1px;background:#000"></div>
<div class="a" style="left:88px;top:708px;width:1px;height:1px;background:#000"></div>
<div class="a" style="left:96px;top:700px;width:1px;height:1px;background:#000"></div>
<div class="a" style="left:90px;top:708px;width:1px;height:1px;background:#000"></div>
<div class="a" style="left:96px;top:702px;width:1px;height:1px;background:#000"></div>
<div class="a" style="left:92px;top:708px;width:1px;height:1px;background:#000"></div>
<div class="a" style="left:96px;top:704px;width:1px;height:1px;background:#000"></div>
<div class="a" style="left:94px;top:708px;width:1px;height:1px;background:#000"></div>
<div class="a" style="left:96px;top:706px;width:1px;height:1px;background:#000"></div>
<div class="a" style="left:96px;top:708px;width:1px;height:1px;background:#000"></div>
<div class="a" style="left:96px;top:708px;width:1px;height:1px;background:#000"></div>
<div class="a" style="left:86px;top:704px;width:1px;height:1px;background:#000"></div>
<div class="a" style="left:92px;top:698px;width:1px;height:1px;background:#000"></div>
<div class="a" style="left:86px;top:706px;width:1px;height:1px;background:#000"></div>
<div class="a" style="left:94px;top:698px;width:1px;height:1px;background:#000"></div>
<div class="a" style="left:86px;top:708px;width:1px;height:1px;background:#000"></div>
<div class="a" style="left:96px;top:698px;width:1px;height:1px;background:#000"></div>
<div class="a" style="left:82px;top:698px;width:3px;height:1px;background:#000"></div>
<div class="a" style="left:88px;top:698px;width:3px;height:1px;background:#000"></div>
<div class="a" style="left:86px;top:698px;width:1px;height:1px;background:#000"></div>
<div class="a" style="left:86px;top:695px;width:1px;height:2px;background:#000"></div>
<div class="a" style="left:86px;top:700px;width:1px;height:3px;background:#000"></div>
<div class="t" style="left:100px;top:697px;font-size:11px;color:#000;">3,80; 0,00</div>
<div class="a" style="left:196px;top:700px;width:1px;height:1px;background:#000"></div>
<div class="a" style="left:196px;top:708px;width:1px;height:1px;background:#000"></div>
<div class="a" style="left:196px;top:700px;width:1px;height:1px;background:#000"></div>
<div class="a" style="left:204px;top:700px;width:1px;height:1px;background:#000"></div>
<div class="a" style="left:198px;top:700px;width:1px;height:1px;background:#000"></div>
<div class="a" style="left:198px;top:708px;width:1px;height:1px;background:#000"></div>
<div class="a" style="left:196px;top:702px;width:1px;height:1px;background:#000"></div>
<div class="a" style="left:204px;top:702px;width:1px;height:1px;background:#000"></div>
<div class="a" style="left:200px;top:700px;width:1px;height:1px;background:#000"></div>
<div class="a" style="left:200px;top:708px;width:1px;height:1px;background:#000"></div>
<div class="a" style="left:196px;top:704px;width:1px;height:1px;background:#000"></div>
<div class="a" style="left:204px;top:704px;width:1px;height:1px;background:#000"></div>
<div class="a" style="left:202px;top:700px;width:1px;height:1px;background:#000"></div>
<div class="a" style="left:202px;top:708px;width:1px;height:1px;background:#000"></div>
<div class="a" style="left:196px;top:706px;width:1px;height:1px;background:#000"></div>
<div class="a" style="left:204px;top:706px;width:1px;height:1px;background:#000"></div>
<div class="a" style="left:204px;top:700px;width:1px;height:1px;background:#000"></div>
<div class="a" style="left:204px;top:708px;width:1px;height:1px;background:#000"></div>
<div class="a" style="left:196px;top:708px;width:1px;height:1px;background:#000"></div>
<div class="a" style="left:204px;top:708px;width:1px;height:1px;background:#000"></div>
<div class="a" style="left:196px;top:695px;width:1px;height:3px;background:#000"></div>
<div class="a" style="left:204px;top:695px;width:1px;height:3px;background:#000"></div>
<div class="a" style="left:198px;top:696px;width:5px;height:1px;background:#000"></div>
<div class="a" style="left:201px;top:697px;width:1px;height:1px;background:#000"></div>
<div class="a" style="left:190px;top:700px;width:5px;height:1px;background:#000"></div>
<div class="a" style="left:190px;top:708px;width:5px;height:1px;background:#000"></div>
<div class="a" style="left:192px;top:702px;width:1px;height:6px;background:#000"></div>
<div class="a" style="left:190px;top:705px;width:1px;height:1px;background:#000"></div>
<div class="a" style="left:194px;top:705px;width:1px;height:1px;background:#000"></div>
<div class="t" style="left:211px;top:697px;font-size:11px;color:#000;">1,10; 1,30</div>
<div class="a" style="left:306px;top:694px;width:1px;height:16px;background:#d7d7d7"></div>
<div class="t" style="left:310px;top:697px;font-size:11px;color:#000;">Memo8: Чек комірника."Підготовка"</div>
<div class="a" style="left:971px;top:700px;width:2px;height:2px;background:#a0a0a0"></div>
<div class="a" style="left:968px;top:703px;width:2px;height:2px;background:#a0a0a0"></div>
<div class="a" style="left:971px;top:703px;width:2px;height:2px;background:#a0a0a0"></div>
<div class="a" style="left:965px;top:706px;width:2px;height:2px;background:#a0a0a0"></div>
<div class="a" style="left:968px;top:706px;width:2px;height:2px;background:#a0a0a0"></div>
<div class="a" style="left:971px;top:706px;width:2px;height:2px;background:#a0a0a0"></div>
</body></html>
